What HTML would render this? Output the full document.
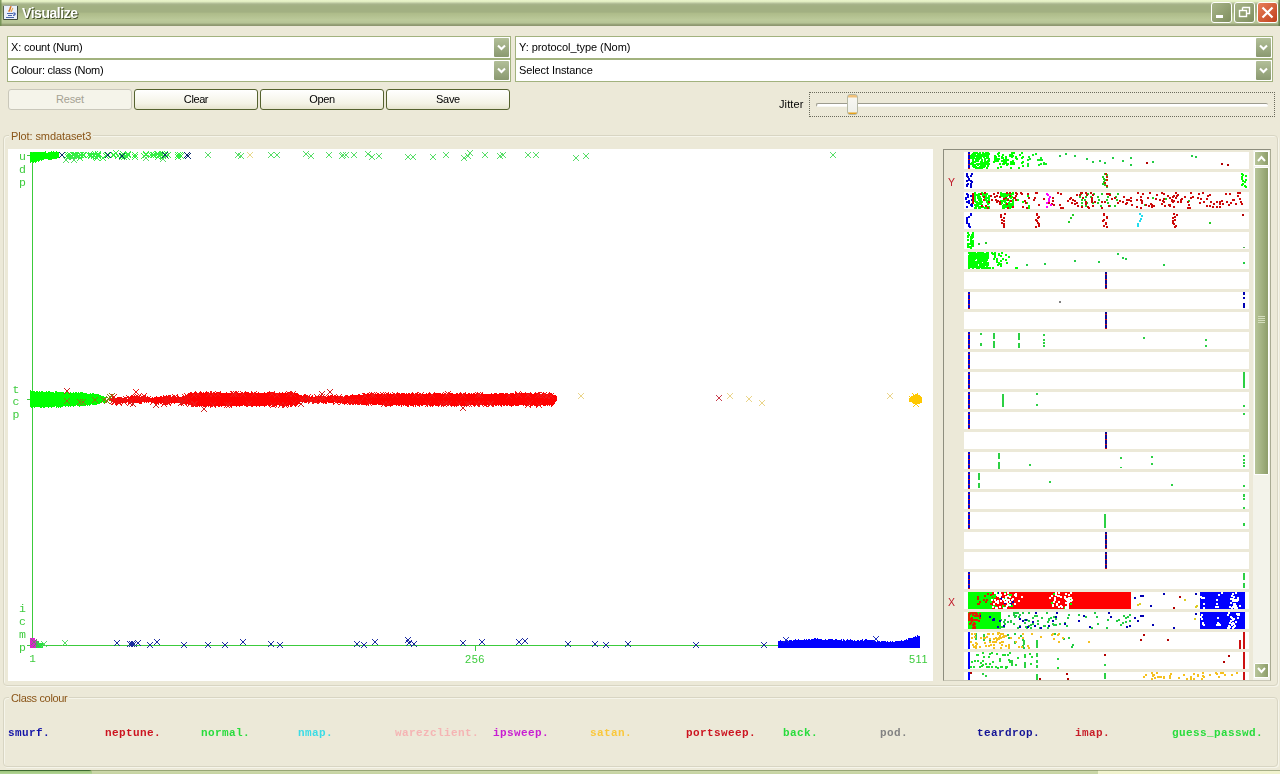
<!DOCTYPE html>
<html><head><meta charset="utf-8"><title>Visualize</title>
<style>
html,body{margin:0;padding:0;}
body{opacity:0.999;}
body{width:1280px;height:774px;overflow:hidden;background:#ECE9D8;position:relative;font-family:"Liberation Sans",sans-serif;font-size:11px;color:#000;}
.abs{position:absolute;}
#title{left:0;top:0;width:1280px;height:26px;background:linear-gradient(to bottom,#EAF5CC 0px,#E2EEC2 1.5px,#C4D0A8 2.8px,#A8B48C 4px,#A2B082 6px,#A2B082 12px,#AEBC8A 13.5px,#BCCA9A 20px,#B6C496 23px,#A0AC80 24px,#8E9870 25px,#8E9870 26px);}
#title .txt{will-change:transform;left:22px;top:5px;font-weight:bold;font-size:14px;color:#fff;text-shadow:1px 1px 0 #414c28;letter-spacing:-0.45px;white-space:nowrap;}
.cap{top:2px;width:21px;height:21px;box-sizing:border-box;border:1px solid #fff;border-radius:3px;background:linear-gradient(135deg,#a8b58a,#7f8e5e);}
.combo{box-sizing:border-box;height:23px;border:1px solid #A2B27E;background:#fff;}
.combo .t{left:3px;top:4px;white-space:nowrap;}
.combo .b{right:1px;top:1px;width:15px;height:19px;background:linear-gradient(to bottom,#b2bf98,#8a9970);border-radius:1px;}
.btn{box-sizing:border-box;top:89px;width:124px;height:21px;border:1px solid #55622f;border-radius:3px;background:linear-gradient(to bottom,#ffffff,#f4f3e6 70%,#e6e4cf);text-align:center;line-height:19px;}
.btn.dis{border-color:#c9c7ba;background:#f5f4ea;color:#a5a294;}
.gb{box-sizing:border-box;border:1px solid #d8d5c3;border-radius:4px;box-shadow:1px 1px 0 #f6f5ea, inset 1px 1px 0 #f6f5ea;}
.gbt{will-change:transform;background:#ECE9D8;color:#8A5518;padding:0 2px;white-space:nowrap;}
.leg{will-change:transform;top:726.5px;font-family:"Liberation Mono",monospace;font-weight:bold;font-size:11px;white-space:nowrap;letter-spacing:0.4px;}
</style></head><body>

<div id="title" class="abs">
<svg class="abs" style="left:3px;top:5px" width="15" height="15" viewBox="0 0 15 15"><rect x="0.5" y="0.5" width="14" height="14" rx="1" fill="#E9F0FA" stroke="#9aa6a0"/><path d="M0.5 14.5 H14.5 V1" stroke="#3e4c3a" stroke-width="1" fill="none"/><path d="M0.5 1 V14.5" stroke="#55644e" stroke-width="1" fill="none"/><path d="M8.3 1.2 C6.2 3.2 8.2 4.2 5.6 6.6" stroke="#D9701A" stroke-width="1.5" fill="none"/><path d="M10 3.2 C8.4 4.6 9.6 5.4 7.8 6.8" stroke="#EBA040" stroke-width="1.1" fill="none"/><path d="M3.5 8.5 H10 M4.5 10.5 H9 M3 12.5 H10.5" stroke="#4a68a8" stroke-width="1" shape-rendering="crispEdges"/><path d="M10.3 7.8 C13 8 12.6 10.4 10 10.4" stroke="#3a5cb0" stroke-width="1.2" fill="none"/></svg>
<div class="abs" style="left:0;top:0;width:2px;height:26px;background:linear-gradient(to right,#6c8c4c,rgba(124,154,92,0.3))"></div>
<div class="abs txt">Visualize</div>
<div class="abs" style="left:1278px;top:0;width:2px;height:26px;background:linear-gradient(to right,rgba(110,140,80,0.4),#587040)"></div>
<div class="abs cap" style="left:1211px"><svg width="19" height="19"><rect x="4" y="12" width="7" height="3" fill="#fff"/></svg></div>
<div class="abs cap" style="left:1234px"><svg width="19" height="19"><path d="M7.5 4.5 H14.5 V10.5 H12 M7.5 4.5 V7" stroke="#fff" stroke-width="1.4" fill="none"/><rect x="4.5" y="7.5" width="7" height="6" stroke="#fff" stroke-width="1.4" fill="none"/></svg></div>
<div class="abs cap" style="left:1257px;background:linear-gradient(135deg,#e8805a,#c0401c)"><svg width="19" height="19"><path d="M4.5 4.5 L14.5 14.5 M14.5 4.5 L4.5 14.5" stroke="#fff" stroke-width="2.2"/></svg></div>
</div>
<div class="abs combo" style="left:7px;top:36px;width:504px"><div class="abs t" style="letter-spacing:-0.18px">X: count (Num)</div><div class="abs b"><svg class="abs" style="left:3px;top:6px" width="9" height="7"><path d="M1 1.5 L4.5 5 L8 1.5" stroke="#fff" stroke-width="2.1" fill="none"/></svg></div></div>
<div class="abs combo" style="left:7px;top:59px;width:504px"><div class="abs t" style="letter-spacing:-0.25px">Colour: class (Nom)</div><div class="abs b"><svg class="abs" style="left:3px;top:6px" width="9" height="7"><path d="M1 1.5 L4.5 5 L8 1.5" stroke="#fff" stroke-width="2.1" fill="none"/></svg></div></div>
<div class="abs combo" style="left:515px;top:36px;width:758px"><div class="abs t" style="letter-spacing:-0.05px">Y: protocol_type (Nom)</div><div class="abs b"><svg class="abs" style="left:3px;top:6px" width="9" height="7"><path d="M1 1.5 L4.5 5 L8 1.5" stroke="#fff" stroke-width="2.1" fill="none"/></svg></div></div>
<div class="abs combo" style="left:515px;top:59px;width:758px"><div class="abs t" style="letter-spacing:-0.1px">Select Instance</div><div class="abs b"><svg class="abs" style="left:3px;top:6px" width="9" height="7"><path d="M1 1.5 L4.5 5 L8 1.5" stroke="#fff" stroke-width="2.1" fill="none"/></svg></div></div>
<div class="abs btn dis" style="left:8px;letter-spacing:-0.15px">Reset</div>
<div class="abs btn" style="left:134px;letter-spacing:-0.4px">Clear</div>
<div class="abs btn" style="left:260px;letter-spacing:-0.3px">Open</div>
<div class="abs btn" style="left:386px;letter-spacing:-0.3px">Save</div>
<div class="abs" style="left:779px;top:98px;letter-spacing:0.1px">Jitter</div>
<div class="abs" style="left:809px;top:92px;width:466px;height:25px;box-sizing:border-box;border:1px dotted #6b6b5c;"></div>
<div class="abs" style="left:816px;top:103px;width:452px;height:4px;box-sizing:border-box;border-top:1px solid #9d9c8e;border-left:1px solid #9d9c8e;background:#fff;border-radius:2px;border-bottom:1px solid #f8f8f2"></div>
<div class="abs" style="left:847px;top:94px;width:11px;height:21px;box-sizing:border-box;border:1px solid #b5b8a5;border-radius:3px;background:linear-gradient(to bottom,#f0c078 0,#f0c078 2px,#f7f7f2 3px,#eef0ea 17px,#e5a01b 18px,#e5a01b 21px);"></div>
<div class="abs gb" style="left:3px;top:135px;width:1275px;height:551px"></div>
<div class="abs gbt" style="left:9px;top:130px;letter-spacing:-0.1px">Plot: smdataset3</div>
<div class="abs" style="left:8px;top:149px;width:925px;height:532px;background:#fff"></div>
<div class="abs" style="left:943px;top:149px;width:328px;height:532px;box-sizing:border-box;border:1px solid #8e8e7e;border-bottom-color:#c9c7b6;border-right-color:#a9aa92"></div>
<div class="abs gb" style="left:3px;top:697px;width:1275px;height:70px"></div>
<div class="abs gbt" style="left:9px;top:692px;letter-spacing:-0.35px">Class colour</div>
<div class="abs leg" style="left:8px;color:#1414A8">smurf.</div>
<div class="abs leg" style="left:105px;color:#CC1420">neptune.</div>
<div class="abs leg" style="left:201px;color:#28DC3C">normal.</div>
<div class="abs leg" style="left:298px;color:#3CDCE6">nmap.</div>
<div class="abs leg" style="left:395px;color:#F5B4B4">warezclient.</div>
<div class="abs leg" style="left:493px;color:#C81ED2">ipsweep.</div>
<div class="abs leg" style="left:590px;color:#FAC83C">satan.</div>
<div class="abs leg" style="left:686px;color:#CC1420">portsweep.</div>
<div class="abs leg" style="left:783px;color:#28DC3C">back.</div>
<div class="abs leg" style="left:880px;color:#828282">pod.</div>
<div class="abs leg" style="left:977px;color:#141496">teardrop.</div>
<div class="abs leg" style="left:1075px;color:#C81E28">imap.</div>
<div class="abs leg" style="left:1172px;color:#28DC3C">guess_passwd.</div>
<div class="abs" style="left:0;top:770px;width:1280px;height:4px;background:linear-gradient(to bottom,#98A676 0,#98A676 1px,#CCD8AA 1px,#C6D3A2 4px)"></div>
<div class="abs" style="left:0;top:770px;width:92px;height:4px;background:linear-gradient(to bottom,#3E6A30 0,#3E6A30 1px,#9CC47C 1px,#B4D696 4px);border-top-right-radius:3px"></div>
<div class="abs" style="left:1098px;top:770px;width:182px;height:4px;background:linear-gradient(to bottom,#A8B088 0,#A8B088 1px,#F2F4D0 1px,#F0F2CC 4px)"></div>
<svg class="abs" style="left:0;top:0" width="1280" height="774" viewBox="0 0 1280 774" shape-rendering="crispEdges">
<defs><path id="x" d="M-3 -3 L3 3 M3 -3 L-3 3" stroke-width="1" fill="none"/></defs>
<g stroke="#3CCB3C" stroke-width="1" fill="none"><path d="M32.5 152 V645.5 M27 645.5 H920 M475.5 645 V651 M27 155.5 H32 M27 399.5 H32"/></g>
<text x="22.5" y="160" font-family='"Liberation Mono",monospace' font-size="11.5" text-anchor="middle" fill="#3CCB3C">u</text>
<text x="22.5" y="173" font-family='"Liberation Mono",monospace' font-size="11.5" text-anchor="middle" fill="#3CCB3C">d</text>
<text x="22.5" y="186" font-family='"Liberation Mono",monospace' font-size="11.5" text-anchor="middle" fill="#3CCB3C">p</text>
<text x="16" y="393" font-family='"Liberation Mono",monospace' font-size="11.5" text-anchor="middle" fill="#3CCB3C">t</text>
<text x="16" y="405" font-family='"Liberation Mono",monospace' font-size="11.5" text-anchor="middle" fill="#3CCB3C">c</text>
<text x="16" y="418" font-family='"Liberation Mono",monospace' font-size="11.5" text-anchor="middle" fill="#3CCB3C">p</text>
<text x="22.5" y="612" font-family='"Liberation Mono",monospace' font-size="11.5" text-anchor="middle" fill="#3CCB3C">i</text>
<text x="22.5" y="625" font-family='"Liberation Mono",monospace' font-size="11.5" text-anchor="middle" fill="#3CCB3C">c</text>
<text x="22.5" y="638" font-family='"Liberation Mono",monospace' font-size="11.5" text-anchor="middle" fill="#3CCB3C">m</text>
<text x="22.5" y="651" font-family='"Liberation Mono",monospace' font-size="11.5" text-anchor="middle" fill="#3CCB3C">p</text>
<text x="32.5" y="662" font-family='"Liberation Mono",monospace' font-size="11" text-anchor="middle" fill="#3CCB3C">1</text>
<text x="475" y="663" font-family='"Liberation Sans",sans-serif' letter-spacing='0.5' font-size="11" text-anchor="middle" fill="#3CCB3C">256</text>
<text x="918.5" y="663" font-family='"Liberation Sans",sans-serif' letter-spacing='0.5' font-size="11" text-anchor="middle" fill="#3CCB3C">511</text>
<path d="M30 152 L31 152 L31 152 L32 152 L32 153 L33 153 L33 152 L34 152 L34 152 L35 152 L35 152 L36 152 L36 152 L37 152 L37 152 L38 152 L38 152 L39 152 L39 152 L40 152 L40 152 L41 152 L41 152 L42 152 L42 152 L43 152 L43 152 L44 152 L44 152 L45 152 L45 151 L46 151 L46 153 L47 153 L47 153 L48 153 L48 152 L49 152 L49 152 L50 152 L50 152 L51 152 L51 151 L52 151 L52 152 L53 152 L53 151 L54 151 L54 152 L55 152 L55 152 L56 152 L56 151 L57 151 L57 152 L58 152 L58 152 L59 152 L59 158 L58 158 L58 158 L57 158 L57 159 L56 159 L56 159 L55 159 L55 159 L54 159 L54 159 L53 159 L53 159 L52 159 L52 160 L51 160 L51 160 L50 160 L50 160 L49 160 L49 160 L48 160 L48 159 L47 159 L47 159 L46 159 L46 159 L45 159 L45 159 L44 159 L44 160 L43 160 L43 160 L42 160 L42 161 L41 161 L41 160 L40 160 L40 161 L39 161 L39 162 L38 162 L38 161 L37 161 L37 162 L36 162 L36 163 L35 163 L35 162 L34 162 L34 163 L33 163 L33 162 L32 162 L32 162 L31 162 L31 163 L30 163Z" fill="#00FF00"/>
<g stroke="#33EE44" fill="none" stroke-width="1"><use href="#x" x="80" y="155"/><use href="#x" x="72" y="156"/><use href="#x" x="83" y="155"/><use href="#x" x="70" y="155"/><use href="#x" x="68" y="157"/><use href="#x" x="69" y="156"/><use href="#x" x="76" y="155"/><use href="#x" x="79" y="156"/><use href="#x" x="68" y="155"/><use href="#x" x="74" y="155"/><use href="#x" x="70" y="155"/><use href="#x" x="80" y="158"/><use href="#x" x="71" y="156"/><use href="#x" x="73" y="155"/><use href="#x" x="81" y="155"/><use href="#x" x="84" y="155"/><use href="#x" x="70" y="155"/><use href="#x" x="72" y="157"/><use href="#x" x="71" y="156"/><use href="#x" x="76" y="156"/><use href="#x" x="98" y="154"/><use href="#x" x="107" y="155"/><use href="#x" x="128" y="154"/><use href="#x" x="124" y="155"/><use href="#x" x="96" y="157"/><use href="#x" x="122" y="157"/><use href="#x" x="98" y="156"/><use href="#x" x="127" y="157"/><use href="#x" x="96" y="157"/><use href="#x" x="113" y="155"/><use href="#x" x="106" y="156"/><use href="#x" x="128" y="155"/><use href="#x" x="98" y="155"/><use href="#x" x="123" y="154"/><use href="#x" x="113" y="155"/><use href="#x" x="118" y="156"/><use href="#x" x="91" y="155"/><use href="#x" x="124" y="157"/><use href="#x" x="114" y="155"/><use href="#x" x="97" y="158"/><use href="#x" x="89" y="155"/><use href="#x" x="91" y="156"/><use href="#x" x="95" y="154"/><use href="#x" x="94" y="156"/><use href="#x" x="103" y="158"/><use href="#x" x="116" y="153"/><use href="#x" x="156" y="155"/><use href="#x" x="135" y="155"/><use href="#x" x="135" y="157"/><use href="#x" x="165" y="154"/><use href="#x" x="135" y="155"/><use href="#x" x="157" y="154"/><use href="#x" x="144" y="156"/><use href="#x" x="151" y="155"/><use href="#x" x="158" y="157"/><use href="#x" x="157" y="154"/><use href="#x" x="159" y="156"/><use href="#x" x="156" y="155"/><use href="#x" x="163" y="156"/><use href="#x" x="159" y="155"/><use href="#x" x="162" y="154"/><use href="#x" x="146" y="155"/><use href="#x" x="153" y="155"/><use href="#x" x="154" y="155"/><use href="#x" x="166" y="156"/><use href="#x" x="146" y="154"/><use href="#x" x="158" y="154"/><use href="#x" x="161" y="155"/><use href="#x" x="168" y="155"/><use href="#x" x="180" y="155"/><use href="#x" x="178" y="155"/><use href="#x" x="178" y="157"/><use href="#x" x="181" y="156"/></g>
<g stroke="#55DD66" fill="none" stroke-width="1"><use href="#x" x="208" y="155"/><use href="#x" x="238" y="155"/><use href="#x" x="241" y="156"/><use href="#x" x="271" y="155"/><use href="#x" x="277" y="155"/><use href="#x" x="306" y="154"/><use href="#x" x="311" y="156"/><use href="#x" x="329" y="155"/><use href="#x" x="342" y="156"/><use href="#x" x="343" y="155"/><use href="#x" x="346" y="155"/><use href="#x" x="354" y="155"/><use href="#x" x="368" y="154"/><use href="#x" x="372" y="157"/><use href="#x" x="379" y="156"/><use href="#x" x="408" y="157"/><use href="#x" x="413" y="157"/><use href="#x" x="433" y="157"/><use href="#x" x="446" y="155"/><use href="#x" x="464" y="158"/><use href="#x" x="468" y="156"/><use href="#x" x="470" y="153"/><use href="#x" x="485" y="155"/><use href="#x" x="500" y="156"/><use href="#x" x="503" y="155"/><use href="#x" x="528" y="155"/><use href="#x" x="536" y="155"/><use href="#x" x="576" y="158"/><use href="#x" x="586" y="156"/><use href="#x" x="833" y="155"/><use href="#x" x="74" y="160"/><use href="#x" x="66" y="160"/><use href="#x" x="146" y="158"/><use href="#x" x="163" y="159"/></g>
<g stroke="#E8D888" fill="none" stroke-width="1"><use href="#x" x="250" y="155"/></g>
<g stroke="#0C2C6C" fill="none" stroke-width="1"><use href="#x" x="62" y="155"/><use href="#x" x="187" y="155"/><use href="#x" x="188" y="156"/><use href="#x" x="108" y="155"/><use href="#x" x="122" y="156"/><use href="#x" x="165" y="155"/></g>
<path d="M30 390 L31 390 L31 391 L32 391 L32 391 L33 391 L33 391 L34 391 L34 391 L35 391 L35 392 L36 392 L36 391 L37 391 L37 391 L38 391 L38 392 L39 392 L39 391 L40 391 L40 392 L41 392 L41 391 L42 391 L42 391 L43 391 L43 392 L44 392 L44 392 L45 392 L45 392 L46 392 L46 391 L47 391 L47 392 L48 392 L48 391 L49 391 L49 391 L50 391 L50 392 L51 392 L51 392 L52 392 L52 392 L53 392 L53 392 L54 392 L54 393 L55 393 L55 391 L56 391 L56 391 L57 391 L57 392 L58 392 L58 392 L59 392 L59 392 L60 392 L60 392 L61 392 L61 392 L62 392 L62 392 L63 392 L63 392 L64 392 L64 393 L65 393 L65 393 L66 393 L66 392 L67 392 L67 392 L68 392 L68 392 L69 392 L69 393 L70 393 L70 392 L71 392 L71 393 L72 393 L72 393 L73 393 L73 392 L74 392 L74 393 L75 393 L75 392 L76 392 L76 392 L77 392 L77 393 L78 393 L78 392 L79 392 L79 393 L80 393 L80 392 L81 392 L81 392 L82 392 L82 392 L83 392 L83 393 L84 393 L84 393 L85 393 L85 393 L86 393 L86 393 L87 393 L87 394 L88 394 L88 394 L89 394 L89 394 L90 394 L90 393 L91 393 L91 394 L92 394 L92 393 L93 393 L93 393 L94 393 L94 394 L95 394 L95 394 L96 394 L96 394 L97 394 L97 394 L98 394 L98 394 L99 394 L99 395 L100 395 L100 395 L101 395 L101 396 L102 396 L102 396 L103 396 L103 396 L104 396 L104 397 L105 397 L105 397 L106 397 L106 401 L105 401 L105 403 L104 403 L104 403 L103 403 L103 402 L102 402 L102 403 L101 403 L101 403 L100 403 L100 404 L99 404 L99 404 L98 404 L98 404 L97 404 L97 405 L96 405 L96 405 L95 405 L95 405 L94 405 L94 405 L93 405 L93 405 L92 405 L92 404 L91 404 L91 405 L90 405 L90 406 L89 406 L89 405 L88 405 L88 406 L87 406 L87 405 L86 405 L86 406 L85 406 L85 406 L84 406 L84 406 L83 406 L83 406 L82 406 L82 406 L81 406 L81 406 L80 406 L80 407 L79 407 L79 406 L78 406 L78 406 L77 406 L77 405 L76 405 L76 406 L75 406 L75 406 L74 406 L74 407 L73 407 L73 406 L72 406 L72 406 L71 406 L71 407 L70 407 L70 406 L69 406 L69 407 L68 407 L68 406 L67 406 L67 406 L66 406 L66 407 L65 407 L65 406 L64 406 L64 406 L63 406 L63 407 L62 407 L62 407 L61 407 L61 408 L60 408 L60 407 L59 407 L59 408 L58 408 L58 407 L57 407 L57 408 L56 408 L56 406 L55 406 L55 407 L54 407 L54 407 L53 407 L53 407 L52 407 L52 408 L51 408 L51 407 L50 407 L50 407 L49 407 L49 408 L48 408 L48 407 L47 407 L47 407 L46 407 L46 407 L45 407 L45 408 L44 408 L44 408 L43 408 L43 407 L42 407 L42 408 L41 408 L41 408 L40 408 L40 407 L39 407 L39 407 L38 407 L38 407 L37 407 L37 407 L36 407 L36 407 L35 407 L35 408 L34 408 L34 407 L33 407 L33 408 L32 408 L32 408 L31 408 L31 407 L30 407Z" fill="#00FF00"/>
<path d="M108 399 L109 399 L109 398 L110 398 L110 398 L111 398 L111 398 L112 398 L112 397 L113 397 L113 397 L114 397 L114 397 L115 397 L115 398 L116 398 L116 398 L117 398 L117 397 L118 397 L118 397 L119 397 L119 397 L120 397 L120 397 L121 397 L121 398 L122 398 L122 398 L123 398 L123 398 L124 398 L124 398 L125 398 L125 397 L126 397 L126 398 L127 398 L127 399 L128 399 L128 397 L129 397 L129 398 L130 398 L130 396 L131 396 L131 396 L132 396 L132 396 L133 396 L133 397 L134 397 L134 396 L135 396 L135 396 L136 396 L136 397 L137 397 L137 396 L138 396 L138 397 L139 397 L139 396 L140 396 L140 397 L141 397 L141 397 L142 397 L142 397 L143 397 L143 397 L144 397 L144 397 L145 397 L145 397 L146 397 L146 397 L147 397 L147 397 L148 397 L148 397 L149 397 L149 397 L150 397 L150 398 L151 398 L151 398 L152 398 L152 397 L153 397 L153 398 L154 398 L154 397 L155 397 L155 397 L156 397 L156 396 L157 396 L157 397 L158 397 L158 397 L159 397 L159 397 L160 397 L160 396 L161 396 L161 396 L162 396 L162 397 L163 397 L163 396 L164 396 L164 397 L165 397 L165 397 L166 397 L166 395 L167 395 L167 396 L168 396 L168 396 L169 396 L169 396 L170 396 L170 395 L171 395 L171 397 L172 397 L172 396 L173 396 L173 397 L174 397 L174 395 L175 395 L175 396 L176 396 L176 397 L177 397 L177 395 L178 395 L178 396 L179 396 L179 397 L180 397 L180 397 L181 397 L181 397 L182 397 L182 396 L183 396 L183 396 L184 396 L184 397 L185 397 L185 396 L186 396 L186 396 L187 396 L187 394 L188 394 L188 393 L189 393 L189 393 L190 393 L190 392 L191 392 L191 393 L192 393 L192 393 L193 393 L193 393 L194 393 L194 392 L195 392 L195 392 L196 392 L196 392 L197 392 L197 393 L198 393 L198 393 L199 393 L199 393 L200 393 L200 392 L201 392 L201 392 L202 392 L202 393 L203 393 L203 392 L204 392 L204 393 L205 393 L205 392 L206 392 L206 392 L207 392 L207 393 L208 393 L208 392 L209 392 L209 393 L210 393 L210 392 L211 392 L211 393 L212 393 L212 393 L213 393 L213 392 L214 392 L214 392 L215 392 L215 393 L216 393 L216 392 L217 392 L217 392 L218 392 L218 392 L219 392 L219 393 L220 393 L220 392 L221 392 L221 393 L222 393 L222 393 L223 393 L223 393 L224 393 L224 393 L225 393 L225 393 L226 393 L226 392 L227 392 L227 393 L228 393 L228 393 L229 393 L229 393 L230 393 L230 393 L231 393 L231 392 L232 392 L232 393 L233 393 L233 393 L234 393 L234 393 L235 393 L235 393 L236 393 L236 392 L237 392 L237 393 L238 393 L238 393 L239 393 L239 393 L240 393 L240 393 L241 393 L241 393 L242 393 L242 392 L243 392 L243 393 L244 393 L244 392 L245 392 L245 392 L246 392 L246 392 L247 392 L247 392 L248 392 L248 392 L249 392 L249 393 L250 393 L250 393 L251 393 L251 392 L252 392 L252 393 L253 393 L253 393 L254 393 L254 392 L255 392 L255 393 L256 393 L256 393 L257 393 L257 393 L258 393 L258 392 L259 392 L259 393 L260 393 L260 393 L261 393 L261 393 L262 393 L262 393 L263 393 L263 393 L264 393 L264 392 L265 392 L265 393 L266 393 L266 393 L267 393 L267 392 L268 392 L268 392 L269 392 L269 392 L270 392 L270 392 L271 392 L271 392 L272 392 L272 392 L273 392 L273 392 L274 392 L274 393 L275 393 L275 393 L276 393 L276 393 L277 393 L277 393 L278 393 L278 393 L279 393 L279 393 L280 393 L280 393 L281 393 L281 393 L282 393 L282 392 L283 392 L283 393 L284 393 L284 393 L285 393 L285 392 L286 392 L286 393 L287 393 L287 392 L288 392 L288 392 L289 392 L289 392 L290 392 L290 392 L291 392 L291 393 L292 393 L292 392 L293 392 L293 393 L294 393 L294 392 L295 392 L295 393 L296 393 L296 393 L297 393 L297 393 L298 393 L298 394 L299 394 L299 395 L300 395 L300 395 L301 395 L301 395 L302 395 L302 396 L303 396 L303 395 L304 395 L304 394 L305 394 L305 395 L306 395 L306 395 L307 395 L307 395 L308 395 L308 396 L309 396 L309 396 L310 396 L310 397 L311 397 L311 396 L312 396 L312 395 L313 395 L313 397 L314 397 L314 397 L315 397 L315 395 L316 395 L316 397 L317 397 L317 396 L318 396 L318 396 L319 396 L319 397 L320 397 L320 396 L321 396 L321 396 L322 396 L322 397 L323 397 L323 396 L324 396 L324 396 L325 396 L325 397 L326 397 L326 397 L327 397 L327 396 L328 396 L328 395 L329 395 L329 396 L330 396 L330 396 L331 396 L331 395 L332 395 L332 395 L333 395 L333 396 L334 396 L334 395 L335 395 L335 396 L336 396 L336 396 L337 396 L337 396 L338 396 L338 396 L339 396 L339 396 L340 396 L340 396 L341 396 L341 396 L342 396 L342 396 L343 396 L343 397 L344 397 L344 396 L345 396 L345 396 L346 396 L346 395 L347 395 L347 395 L348 395 L348 396 L349 396 L349 396 L350 396 L350 395 L351 395 L351 395 L352 395 L352 394 L353 394 L353 395 L354 395 L354 395 L355 395 L355 395 L356 395 L356 395 L357 395 L357 395 L358 395 L358 394 L359 394 L359 394 L360 394 L360 395 L361 395 L361 395 L362 395 L362 395 L363 395 L363 393 L364 393 L364 393 L365 393 L365 394 L366 394 L366 394 L367 394 L367 394 L368 394 L368 393 L369 393 L369 394 L370 394 L370 393 L371 393 L371 393 L372 393 L372 394 L373 394 L373 394 L374 394 L374 394 L375 394 L375 394 L376 394 L376 394 L377 394 L377 393 L378 393 L378 393 L379 393 L379 394 L380 394 L380 394 L381 394 L381 393 L382 393 L382 393 L383 393 L383 394 L384 394 L384 394 L385 394 L385 394 L386 394 L386 393 L387 393 L387 393 L388 393 L388 393 L389 393 L389 394 L390 394 L390 393 L391 393 L391 394 L392 394 L392 394 L393 394 L393 393 L394 393 L394 393 L395 393 L395 394 L396 394 L396 394 L397 394 L397 393 L398 393 L398 393 L399 393 L399 393 L400 393 L400 394 L401 394 L401 393 L402 393 L402 393 L403 393 L403 393 L404 393 L404 393 L405 393 L405 394 L406 394 L406 393 L407 393 L407 394 L408 394 L408 393 L409 393 L409 393 L410 393 L410 394 L411 394 L411 393 L412 393 L412 393 L413 393 L413 394 L414 394 L414 394 L415 394 L415 393 L416 393 L416 393 L417 393 L417 393 L418 393 L418 394 L419 394 L419 393 L420 393 L420 393 L421 393 L421 394 L422 394 L422 393 L423 393 L423 394 L424 394 L424 394 L425 394 L425 394 L426 394 L426 393 L427 393 L427 394 L428 394 L428 393 L429 393 L429 393 L430 393 L430 393 L431 393 L431 394 L432 394 L432 394 L433 394 L433 393 L434 393 L434 393 L435 393 L435 393 L436 393 L436 393 L437 393 L437 393 L438 393 L438 393 L439 393 L439 393 L440 393 L440 393 L441 393 L441 394 L442 394 L442 393 L443 393 L443 394 L444 394 L444 393 L445 393 L445 393 L446 393 L446 394 L447 394 L447 394 L448 394 L448 393 L449 393 L449 392 L450 392 L450 393 L451 393 L451 393 L452 393 L452 393 L453 393 L453 394 L454 394 L454 394 L455 394 L455 394 L456 394 L456 393 L457 393 L457 393 L458 393 L458 394 L459 394 L459 393 L460 393 L460 393 L461 393 L461 394 L462 394 L462 394 L463 394 L463 393 L464 393 L464 394 L465 394 L465 393 L466 393 L466 394 L467 394 L467 394 L468 394 L468 393 L469 393 L469 393 L470 393 L470 394 L471 394 L471 393 L472 393 L472 394 L473 394 L473 393 L474 393 L474 393 L475 393 L475 394 L476 394 L476 394 L477 394 L477 393 L478 393 L478 393 L479 393 L479 394 L480 394 L480 394 L481 394 L481 394 L482 394 L482 393 L483 393 L483 394 L484 394 L484 394 L485 394 L485 394 L486 394 L486 394 L487 394 L487 394 L488 394 L488 394 L489 394 L489 394 L490 394 L490 394 L491 394 L491 393 L492 393 L492 394 L493 394 L493 394 L494 394 L494 393 L495 393 L495 393 L496 393 L496 393 L497 393 L497 394 L498 394 L498 394 L499 394 L499 393 L500 393 L500 393 L501 393 L501 393 L502 393 L502 393 L503 393 L503 393 L504 393 L504 394 L505 394 L505 393 L506 393 L506 393 L507 393 L507 393 L508 393 L508 394 L509 394 L509 394 L510 394 L510 393 L511 393 L511 393 L512 393 L512 393 L513 393 L513 393 L514 393 L514 394 L515 394 L515 392 L516 392 L516 393 L517 393 L517 393 L518 393 L518 393 L519 393 L519 393 L520 393 L520 394 L521 394 L521 393 L522 393 L522 393 L523 393 L523 393 L524 393 L524 393 L525 393 L525 393 L526 393 L526 394 L527 394 L527 393 L528 393 L528 393 L529 393 L529 394 L530 394 L530 393 L531 393 L531 393 L532 393 L532 394 L533 394 L533 394 L534 394 L534 393 L535 393 L535 393 L536 393 L536 394 L537 394 L537 393 L538 393 L538 393 L539 393 L539 392 L540 392 L540 394 L541 394 L541 394 L542 394 L542 393 L543 393 L543 393 L544 393 L544 393 L545 393 L545 393 L546 393 L546 394 L547 394 L547 394 L548 394 L548 393 L549 393 L549 392 L550 392 L550 393 L551 393 L551 393 L552 393 L552 394 L553 394 L553 395 L554 395 L554 395 L555 395 L555 395 L556 395 L556 396 L557 396 L557 401 L556 401 L556 402 L555 402 L555 404 L554 404 L554 405 L553 405 L553 406 L552 406 L552 407 L551 407 L551 405 L550 405 L550 406 L549 406 L549 405 L548 405 L548 406 L547 406 L547 405 L546 405 L546 406 L545 406 L545 406 L544 406 L544 406 L543 406 L543 405 L542 405 L542 405 L541 405 L541 406 L540 406 L540 405 L539 405 L539 406 L538 406 L538 406 L537 406 L537 407 L536 407 L536 406 L535 406 L535 406 L534 406 L534 405 L533 405 L533 406 L532 406 L532 406 L531 406 L531 407 L530 407 L530 405 L529 405 L529 406 L528 406 L528 405 L527 405 L527 406 L526 406 L526 406 L525 406 L525 405 L524 405 L524 406 L523 406 L523 405 L522 405 L522 405 L521 405 L521 405 L520 405 L520 405 L519 405 L519 406 L518 406 L518 406 L517 406 L517 406 L516 406 L516 406 L515 406 L515 405 L514 405 L514 406 L513 406 L513 406 L512 406 L512 407 L511 407 L511 406 L510 406 L510 406 L509 406 L509 405 L508 405 L508 406 L507 406 L507 406 L506 406 L506 405 L505 405 L505 406 L504 406 L504 406 L503 406 L503 405 L502 405 L502 407 L501 407 L501 406 L500 406 L500 405 L499 405 L499 406 L498 406 L498 405 L497 405 L497 406 L496 406 L496 406 L495 406 L495 405 L494 405 L494 406 L493 406 L493 406 L492 406 L492 406 L491 406 L491 405 L490 405 L490 405 L489 405 L489 406 L488 406 L488 405 L487 405 L487 407 L486 407 L486 406 L485 406 L485 406 L484 406 L484 405 L483 405 L483 406 L482 406 L482 405 L481 405 L481 405 L480 405 L480 405 L479 405 L479 406 L478 406 L478 406 L477 406 L477 405 L476 405 L476 406 L475 406 L475 406 L474 406 L474 406 L473 406 L473 405 L472 405 L472 405 L471 405 L471 405 L470 405 L470 405 L469 405 L469 406 L468 406 L468 405 L467 405 L467 407 L466 407 L466 406 L465 406 L465 406 L464 406 L464 406 L463 406 L463 406 L462 406 L462 406 L461 406 L461 406 L460 406 L460 405 L459 405 L459 406 L458 406 L458 405 L457 405 L457 406 L456 406 L456 406 L455 406 L455 407 L454 407 L454 406 L453 406 L453 406 L452 406 L452 406 L451 406 L451 405 L450 405 L450 405 L449 405 L449 406 L448 406 L448 406 L447 406 L447 405 L446 405 L446 406 L445 406 L445 406 L444 406 L444 406 L443 406 L443 406 L442 406 L442 406 L441 406 L441 405 L440 405 L440 406 L439 406 L439 407 L438 407 L438 406 L437 406 L437 406 L436 406 L436 406 L435 406 L435 405 L434 405 L434 406 L433 406 L433 407 L432 407 L432 406 L431 406 L431 406 L430 406 L430 406 L429 406 L429 405 L428 405 L428 407 L427 407 L427 406 L426 406 L426 405 L425 405 L425 405 L424 405 L424 405 L423 405 L423 406 L422 406 L422 406 L421 406 L421 405 L420 405 L420 407 L419 407 L419 406 L418 406 L418 406 L417 406 L417 405 L416 405 L416 407 L415 407 L415 405 L414 405 L414 407 L413 407 L413 406 L412 406 L412 406 L411 406 L411 406 L410 406 L410 405 L409 405 L409 407 L408 407 L408 407 L407 407 L407 406 L406 406 L406 406 L405 406 L405 405 L404 405 L404 406 L403 406 L403 405 L402 405 L402 407 L401 407 L401 405 L400 405 L400 406 L399 406 L399 406 L398 406 L398 405 L397 405 L397 406 L396 406 L396 405 L395 405 L395 405 L394 405 L394 405 L393 405 L393 406 L392 406 L392 406 L391 406 L391 406 L390 406 L390 405 L389 405 L389 406 L388 406 L388 406 L387 406 L387 405 L386 405 L386 405 L385 405 L385 406 L384 406 L384 404 L383 404 L383 405 L382 405 L382 405 L381 405 L381 405 L380 405 L380 405 L379 405 L379 405 L378 405 L378 404 L377 404 L377 405 L376 405 L376 405 L375 405 L375 405 L374 405 L374 405 L373 405 L373 405 L372 405 L372 404 L371 404 L371 405 L370 405 L370 404 L369 404 L369 406 L368 406 L368 405 L367 405 L367 405 L366 405 L366 405 L365 405 L365 405 L364 405 L364 405 L363 405 L363 405 L362 405 L362 405 L361 405 L361 404 L360 404 L360 405 L359 405 L359 405 L358 405 L358 405 L357 405 L357 404 L356 404 L356 404 L355 404 L355 404 L354 404 L354 405 L353 405 L353 404 L352 404 L352 404 L351 404 L351 404 L350 404 L350 405 L349 405 L349 404 L348 404 L348 403 L347 403 L347 404 L346 404 L346 404 L345 404 L345 404 L344 404 L344 404 L343 404 L343 404 L342 404 L342 403 L341 403 L341 404 L340 404 L340 403 L339 403 L339 403 L338 403 L338 403 L337 403 L337 403 L336 403 L336 403 L335 403 L335 402 L334 402 L334 404 L333 404 L333 403 L332 403 L332 403 L331 403 L331 403 L330 403 L330 403 L329 403 L329 403 L328 403 L328 402 L327 402 L327 404 L326 404 L326 404 L325 404 L325 403 L324 403 L324 404 L323 404 L323 403 L322 403 L322 403 L321 403 L321 402 L320 402 L320 403 L319 403 L319 403 L318 403 L318 403 L317 403 L317 402 L316 402 L316 403 L315 403 L315 402 L314 402 L314 403 L313 403 L313 403 L312 403 L312 402 L311 402 L311 402 L310 402 L310 402 L309 402 L309 402 L308 402 L308 402 L307 402 L307 403 L306 403 L306 403 L305 403 L305 402 L304 402 L304 402 L303 402 L303 403 L302 403 L302 402 L301 402 L301 402 L300 402 L300 404 L299 404 L299 404 L298 404 L298 405 L297 405 L297 406 L296 406 L296 407 L295 407 L295 406 L294 406 L294 405 L293 405 L293 406 L292 406 L292 407 L291 407 L291 407 L290 407 L290 405 L289 405 L289 407 L288 407 L288 406 L287 406 L287 406 L286 406 L286 405 L285 405 L285 407 L284 407 L284 407 L283 407 L283 406 L282 406 L282 406 L281 406 L281 406 L280 406 L280 407 L279 407 L279 405 L278 405 L278 405 L277 405 L277 407 L276 407 L276 406 L275 406 L275 407 L274 407 L274 407 L273 407 L273 407 L272 407 L272 405 L271 405 L271 406 L270 406 L270 407 L269 407 L269 406 L268 406 L268 405 L267 405 L267 406 L266 406 L266 406 L265 406 L265 407 L264 407 L264 406 L263 406 L263 406 L262 406 L262 406 L261 406 L261 406 L260 406 L260 407 L259 407 L259 406 L258 406 L258 406 L257 406 L257 407 L256 407 L256 406 L255 406 L255 406 L254 406 L254 406 L253 406 L253 407 L252 407 L252 407 L251 407 L251 406 L250 406 L250 406 L249 406 L249 406 L248 406 L248 407 L247 407 L247 406 L246 406 L246 406 L245 406 L245 406 L244 406 L244 405 L243 405 L243 406 L242 406 L242 406 L241 406 L241 406 L240 406 L240 407 L239 407 L239 406 L238 406 L238 406 L237 406 L237 407 L236 407 L236 406 L235 406 L235 406 L234 406 L234 406 L233 406 L233 406 L232 406 L232 407 L231 407 L231 407 L230 407 L230 406 L229 406 L229 406 L228 406 L228 407 L227 407 L227 406 L226 406 L226 407 L225 407 L225 406 L224 406 L224 406 L223 406 L223 406 L222 406 L222 407 L221 407 L221 406 L220 406 L220 407 L219 407 L219 407 L218 407 L218 406 L217 406 L217 406 L216 406 L216 407 L215 407 L215 407 L214 407 L214 406 L213 406 L213 407 L212 407 L212 406 L211 406 L211 407 L210 407 L210 406 L209 406 L209 407 L208 407 L208 406 L207 406 L207 406 L206 406 L206 407 L205 407 L205 407 L204 407 L204 407 L203 407 L203 406 L202 406 L202 406 L201 406 L201 406 L200 406 L200 407 L199 407 L199 406 L198 406 L198 406 L197 406 L197 406 L196 406 L196 407 L195 407 L195 406 L194 406 L194 407 L193 407 L193 406 L192 406 L192 405 L191 405 L191 405 L190 405 L190 405 L189 405 L189 405 L188 405 L188 404 L187 404 L187 404 L186 404 L186 404 L185 404 L185 402 L184 402 L184 404 L183 404 L183 403 L182 403 L182 403 L181 403 L181 404 L180 404 L180 403 L179 403 L179 403 L178 403 L178 403 L177 403 L177 402 L176 402 L176 403 L175 403 L175 404 L174 404 L174 403 L173 403 L173 403 L172 403 L172 404 L171 404 L171 403 L170 403 L170 404 L169 404 L169 403 L168 403 L168 403 L167 403 L167 403 L166 403 L166 404 L165 404 L165 404 L164 404 L164 404 L163 404 L163 403 L162 403 L162 404 L161 404 L161 404 L160 404 L160 403 L159 403 L159 405 L158 405 L158 403 L157 403 L157 404 L156 404 L156 404 L155 404 L155 404 L154 404 L154 403 L153 403 L153 403 L152 403 L152 403 L151 403 L151 402 L150 402 L150 402 L149 402 L149 403 L148 403 L148 402 L147 402 L147 403 L146 403 L146 402 L145 402 L145 403 L144 403 L144 402 L143 402 L143 402 L142 402 L142 404 L141 404 L141 404 L140 404 L140 404 L139 404 L139 403 L138 403 L138 403 L137 403 L137 403 L136 403 L136 403 L135 403 L135 403 L134 403 L134 404 L133 404 L133 403 L132 403 L132 403 L131 403 L131 404 L130 404 L130 403 L129 403 L129 402 L128 402 L128 402 L127 402 L127 402 L126 402 L126 401 L125 401 L125 402 L124 402 L124 403 L123 403 L123 403 L122 403 L122 403 L121 403 L121 403 L120 403 L120 403 L119 403 L119 402 L118 402 L118 403 L117 403 L117 403 L116 403 L116 403 L115 403 L115 402 L114 402 L114 402 L113 402 L113 402 L112 402 L112 402 L111 402 L111 401 L110 401 L110 401 L109 401 L109 400 L108 400Z" fill="#FF0000"/>
<g stroke="#8A7A10" fill="none" stroke-width="1"><use href="#x" x="67" y="401"/><use href="#x" x="80" y="402"/><use href="#x" x="83" y="402"/><use href="#x" x="95" y="400"/><use href="#x" x="110" y="397"/><use href="#x" x="112" y="396"/><use href="#x" x="104" y="400"/><use href="#x" x="107" y="401"/><use href="#x" x="109" y="399"/></g>
<g stroke="#F01010" fill="none" stroke-width="1"><use href="#x" x="148" y="399"/><use href="#x" x="136" y="392"/><use href="#x" x="165" y="402"/><use href="#x" x="179" y="400"/><use href="#x" x="118" y="402"/><use href="#x" x="166" y="398"/><use href="#x" x="113" y="401"/><use href="#x" x="126" y="399"/><use href="#x" x="184" y="402"/><use href="#x" x="168" y="399"/><use href="#x" x="124" y="402"/><use href="#x" x="185" y="397"/><use href="#x" x="168" y="403"/><use href="#x" x="183" y="402"/><use href="#x" x="142" y="400"/><use href="#x" x="118" y="401"/><use href="#x" x="172" y="398"/><use href="#x" x="153" y="402"/><use href="#x" x="131" y="400"/><use href="#x" x="115" y="402"/><use href="#x" x="114" y="402"/><use href="#x" x="136" y="397"/><use href="#x" x="123" y="401"/><use href="#x" x="167" y="399"/><use href="#x" x="164" y="404"/><use href="#x" x="123" y="400"/><use href="#x" x="168" y="402"/><use href="#x" x="144" y="396"/><use href="#x" x="130" y="403"/><use href="#x" x="135" y="398"/><use href="#x" x="115" y="401"/><use href="#x" x="114" y="397"/><use href="#x" x="175" y="397"/><use href="#x" x="188" y="398"/><use href="#x" x="184" y="403"/><use href="#x" x="129" y="398"/><use href="#x" x="187" y="396"/><use href="#x" x="180" y="400"/><use href="#x" x="119" y="403"/><use href="#x" x="145" y="399"/><use href="#x" x="142" y="400"/><use href="#x" x="138" y="397"/><use href="#x" x="124" y="400"/><use href="#x" x="143" y="398"/><use href="#x" x="164" y="400"/><use href="#x" x="131" y="401"/></g>
<g stroke="#F01818" fill="none" stroke-width="1"><use href="#x" x="343" y="398"/><use href="#x" x="444" y="404"/><use href="#x" x="198" y="394"/><use href="#x" x="213" y="394"/><use href="#x" x="369" y="403"/><use href="#x" x="308" y="397"/><use href="#x" x="316" y="401"/><use href="#x" x="285" y="405"/><use href="#x" x="360" y="402"/><use href="#x" x="321" y="400"/><use href="#x" x="469" y="404"/><use href="#x" x="339" y="397"/><use href="#x" x="490" y="404"/><use href="#x" x="519" y="395"/><use href="#x" x="374" y="395"/><use href="#x" x="544" y="395"/><use href="#x" x="273" y="405"/><use href="#x" x="190" y="404"/><use href="#x" x="277" y="395"/><use href="#x" x="388" y="404"/><use href="#x" x="491" y="404"/><use href="#x" x="315" y="401"/><use href="#x" x="449" y="404"/><use href="#x" x="539" y="405"/><use href="#x" x="415" y="395"/><use href="#x" x="324" y="398"/><use href="#x" x="383" y="395"/><use href="#x" x="308" y="397"/><use href="#x" x="236" y="394"/><use href="#x" x="227" y="405"/><use href="#x" x="353" y="402"/><use href="#x" x="249" y="404"/><use href="#x" x="209" y="394"/><use href="#x" x="478" y="395"/><use href="#x" x="281" y="405"/><use href="#x" x="311" y="400"/><use href="#x" x="490" y="404"/><use href="#x" x="446" y="403"/><use href="#x" x="480" y="395"/><use href="#x" x="432" y="395"/><use href="#x" x="195" y="404"/><use href="#x" x="541" y="395"/><use href="#x" x="342" y="402"/><use href="#x" x="528" y="405"/><use href="#x" x="448" y="394"/><use href="#x" x="294" y="403"/><use href="#x" x="233" y="394"/><use href="#x" x="386" y="395"/><use href="#x" x="302" y="400"/><use href="#x" x="293" y="394"/><use href="#x" x="467" y="404"/><use href="#x" x="441" y="404"/><use href="#x" x="243" y="394"/><use href="#x" x="528" y="395"/><use href="#x" x="234" y="394"/><use href="#x" x="395" y="395"/><use href="#x" x="289" y="394"/><use href="#x" x="322" y="397"/><use href="#x" x="213" y="405"/><use href="#x" x="218" y="394"/><use href="#x" x="551" y="396"/><use href="#x" x="365" y="396"/><use href="#x" x="333" y="398"/><use href="#x" x="428" y="404"/><use href="#x" x="530" y="403"/><use href="#x" x="350" y="402"/><use href="#x" x="254" y="394"/><use href="#x" x="233" y="394"/><use href="#x" x="463" y="395"/><use href="#x" x="194" y="395"/><use href="#x" x="194" y="404"/><use href="#x" x="477" y="404"/><use href="#x" x="481" y="404"/><use href="#x" x="547" y="396"/><use href="#x" x="336" y="402"/><use href="#x" x="519" y="395"/><use href="#x" x="272" y="394"/><use href="#x" x="428" y="404"/><use href="#x" x="421" y="395"/><use href="#x" x="518" y="394"/><use href="#x" x="311" y="401"/><use href="#x" x="459" y="404"/><use href="#x" x="254" y="394"/><use href="#x" x="317" y="397"/><use href="#x" x="372" y="395"/><use href="#x" x="384" y="404"/><use href="#x" x="509" y="396"/><use href="#x" x="229" y="405"/><use href="#x" x="538" y="395"/><use href="#x" x="446" y="395"/></g>
<g stroke="#D02020" fill="none" stroke-width="1"><use href="#x" x="67" y="391"/><use href="#x" x="330" y="392"/><use href="#x" x="322" y="394"/><use href="#x" x="133" y="404"/><use href="#x" x="156" y="405"/><use href="#x" x="463" y="408"/><use href="#x" x="204" y="409"/><use href="#x" x="181" y="403"/><use href="#x" x="301" y="404"/><use href="#x" x="306" y="399"/></g>
<g stroke="#EAD488" fill="none" stroke-width="1"><use href="#x" x="581" y="396"/><use href="#x" x="730" y="396"/><use href="#x" x="749" y="399"/><use href="#x" x="762" y="403"/><use href="#x" x="890" y="396"/></g>
<g stroke="#C83C4C" fill="none" stroke-width="1"><use href="#x" x="719" y="398"/></g>
<path d="M909 398 L910 398 L910 398 L911 398 L911 396 L912 396 L912 396 L913 396 L913 395 L914 395 L914 396 L915 396 L915 394 L916 394 L916 394 L917 394 L917 394 L918 394 L918 395 L919 395 L919 395 L920 395 L920 396 L921 396 L921 397 L922 397 L922 403 L921 403 L921 403 L920 403 L920 404 L919 404 L919 404 L918 404 L918 404 L917 404 L917 405 L916 405 L916 405 L915 405 L915 404 L914 404 L914 404 L913 404 L913 403 L912 403 L912 402 L911 402 L911 402 L910 402 L910 402 L909 402Z" fill="#FFC800"/>
<g stroke="#FFC800" fill="none" stroke-width="1"><use href="#x" x="916" y="404"/><use href="#x" x="912" y="399"/><use href="#x" x="915" y="396"/></g>
<path d="M30 638h5v2h2v8h-7z" fill="#D828C8"/>
<path d="M36 641h3v2h4v5h-7z" fill="#28E040"/>
<g stroke="#55DD66" fill="none" stroke-width="1"><use href="#x" x="44" y="644"/><use href="#x" x="65" y="643"/></g>
<g stroke="#787878" fill="none" stroke-width="1"><use href="#x" x="34" y="642"/><use href="#x" x="36" y="644"/></g>
<g stroke="#1C2CA0" fill="none" stroke-width="1"><use href="#x" x="117" y="643"/><use href="#x" x="130" y="644"/><use href="#x" x="132" y="644"/><use href="#x" x="134" y="644"/><use href="#x" x="138" y="643"/><use href="#x" x="150" y="645"/><use href="#x" x="157" y="642"/><use href="#x" x="184" y="645"/><use href="#x" x="208" y="645"/><use href="#x" x="225" y="645"/><use href="#x" x="243" y="642"/><use href="#x" x="271" y="644"/><use href="#x" x="280" y="645"/><use href="#x" x="357" y="644"/><use href="#x" x="364" y="645"/><use href="#x" x="375" y="642"/><use href="#x" x="408" y="640"/><use href="#x" x="409" y="643"/><use href="#x" x="414" y="644"/><use href="#x" x="463" y="643"/><use href="#x" x="482" y="642"/><use href="#x" x="519" y="642"/><use href="#x" x="525" y="641"/><use href="#x" x="568" y="644"/><use href="#x" x="595" y="644"/><use href="#x" x="606" y="645"/><use href="#x" x="628" y="644"/><use href="#x" x="696" y="645"/><use href="#x" x="764" y="645"/></g>
<path d="M778 641 L779 641 L779 641 L780 641 L780 640 L781 640 L781 641 L782 641 L782 641 L783 641 L783 641 L784 641 L784 641 L785 641 L785 641 L786 641 L786 640 L787 640 L787 640 L788 640 L788 641 L789 641 L789 640 L790 640 L790 640 L791 640 L791 640 L792 640 L792 641 L793 641 L793 640 L794 640 L794 640 L795 640 L795 639 L796 639 L796 640 L797 640 L797 640 L798 640 L798 639 L799 639 L799 640 L800 640 L800 640 L801 640 L801 640 L802 640 L802 640 L803 640 L803 640 L804 640 L804 639 L805 639 L805 640 L806 640 L806 639 L807 639 L807 640 L808 640 L808 639 L809 639 L809 639 L810 639 L810 640 L811 640 L811 639 L812 639 L812 639 L813 639 L813 639 L814 639 L814 638 L815 638 L815 638 L816 638 L816 639 L817 639 L817 638 L818 638 L818 639 L819 639 L819 639 L820 639 L820 639 L821 639 L821 639 L822 639 L822 640 L823 640 L823 640 L824 640 L824 640 L825 640 L825 639 L826 639 L826 640 L827 640 L827 640 L828 640 L828 639 L829 639 L829 639 L830 639 L830 639 L831 639 L831 639 L832 639 L832 639 L833 639 L833 640 L834 640 L834 640 L835 640 L835 639 L836 639 L836 639 L837 639 L837 640 L838 640 L838 640 L839 640 L839 640 L840 640 L840 640 L841 640 L841 639 L842 639 L842 641 L843 641 L843 639 L844 639 L844 640 L845 640 L845 641 L846 641 L846 640 L847 640 L847 639 L848 639 L848 640 L849 640 L849 640 L850 640 L850 639 L851 639 L851 640 L852 640 L852 640 L853 640 L853 641 L854 641 L854 640 L855 640 L855 641 L856 641 L856 641 L857 641 L857 640 L858 640 L858 640 L859 640 L859 641 L860 641 L860 640 L861 640 L861 640 L862 640 L862 639 L863 639 L863 641 L864 641 L864 640 L865 640 L865 639 L866 639 L866 639 L867 639 L867 640 L868 640 L868 640 L869 640 L869 640 L870 640 L870 640 L871 640 L871 640 L872 640 L872 640 L873 640 L873 640 L874 640 L874 641 L875 641 L875 641 L876 641 L876 642 L877 642 L877 641 L878 641 L878 641 L879 641 L879 641 L880 641 L880 642 L881 642 L881 641 L882 641 L882 641 L883 641 L883 641 L884 641 L884 641 L885 641 L885 641 L886 641 L886 642 L887 642 L887 641 L888 641 L888 642 L889 642 L889 642 L890 642 L890 641 L891 641 L891 642 L892 642 L892 641 L893 641 L893 642 L894 642 L894 642 L895 642 L895 641 L896 641 L896 641 L897 641 L897 641 L898 641 L898 641 L899 641 L899 641 L900 641 L900 641 L901 641 L901 640 L902 640 L902 641 L903 641 L903 641 L904 641 L904 640 L905 640 L905 640 L906 640 L906 639 L907 639 L907 640 L908 640 L908 638 L909 638 L909 638 L910 638 L910 638 L911 638 L911 638 L912 638 L912 638 L913 638 L913 637 L914 637 L914 637 L915 637 L915 636 L916 636 L916 637 L917 637 L917 635 L918 635 L918 636 L919 636 L919 636 L920 636 L920 648 L919 648 L919 648 L918 648 L918 648 L917 648 L917 648 L916 648 L916 648 L915 648 L915 648 L914 648 L914 648 L913 648 L913 648 L912 648 L912 648 L911 648 L911 648 L910 648 L910 648 L909 648 L909 648 L908 648 L908 648 L907 648 L907 648 L906 648 L906 648 L905 648 L905 648 L904 648 L904 648 L903 648 L903 648 L902 648 L902 648 L901 648 L901 648 L900 648 L900 648 L899 648 L899 648 L898 648 L898 648 L897 648 L897 648 L896 648 L896 648 L895 648 L895 648 L894 648 L894 648 L893 648 L893 648 L892 648 L892 648 L891 648 L891 648 L890 648 L890 648 L889 648 L889 648 L888 648 L888 648 L887 648 L887 648 L886 648 L886 648 L885 648 L885 648 L884 648 L884 648 L883 648 L883 648 L882 648 L882 648 L881 648 L881 648 L880 648 L880 648 L879 648 L879 648 L878 648 L878 648 L877 648 L877 648 L876 648 L876 648 L875 648 L875 648 L874 648 L874 648 L873 648 L873 648 L872 648 L872 648 L871 648 L871 648 L870 648 L870 648 L869 648 L869 648 L868 648 L868 648 L867 648 L867 648 L866 648 L866 648 L865 648 L865 648 L864 648 L864 648 L863 648 L863 648 L862 648 L862 648 L861 648 L861 648 L860 648 L860 648 L859 648 L859 648 L858 648 L858 648 L857 648 L857 648 L856 648 L856 648 L855 648 L855 648 L854 648 L854 648 L853 648 L853 648 L852 648 L852 648 L851 648 L851 648 L850 648 L850 648 L849 648 L849 648 L848 648 L848 648 L847 648 L847 648 L846 648 L846 648 L845 648 L845 648 L844 648 L844 648 L843 648 L843 648 L842 648 L842 648 L841 648 L841 648 L840 648 L840 648 L839 648 L839 648 L838 648 L838 648 L837 648 L837 648 L836 648 L836 648 L835 648 L835 648 L834 648 L834 648 L833 648 L833 648 L832 648 L832 648 L831 648 L831 648 L830 648 L830 648 L829 648 L829 648 L828 648 L828 648 L827 648 L827 648 L826 648 L826 648 L825 648 L825 648 L824 648 L824 648 L823 648 L823 648 L822 648 L822 648 L821 648 L821 648 L820 648 L820 648 L819 648 L819 648 L818 648 L818 648 L817 648 L817 648 L816 648 L816 648 L815 648 L815 648 L814 648 L814 648 L813 648 L813 648 L812 648 L812 648 L811 648 L811 648 L810 648 L810 648 L809 648 L809 648 L808 648 L808 648 L807 648 L807 648 L806 648 L806 648 L805 648 L805 648 L804 648 L804 648 L803 648 L803 648 L802 648 L802 648 L801 648 L801 648 L800 648 L800 648 L799 648 L799 648 L798 648 L798 648 L797 648 L797 648 L796 648 L796 648 L795 648 L795 648 L794 648 L794 648 L793 648 L793 648 L792 648 L792 648 L791 648 L791 648 L790 648 L790 648 L789 648 L789 648 L788 648 L788 648 L787 648 L787 648 L786 648 L786 648 L785 648 L785 648 L784 648 L784 648 L783 648 L783 648 L782 648 L782 648 L781 648 L781 648 L780 648 L780 648 L779 648 L779 648 L778 648Z" fill="#0000FF"/>
<g stroke="#2030C0" fill="none" stroke-width="1"><use href="#x" x="786" y="640"/><use href="#x" x="876" y="639"/></g>
<rect x="964" y="152" width="285" height="17" fill="#fff"/>
<rect x="964" y="172" width="285" height="17" fill="#fff"/>
<rect x="964" y="192" width="285" height="17" fill="#fff"/>
<rect x="964" y="212" width="285" height="17" fill="#fff"/>
<rect x="964" y="232" width="285" height="17" fill="#fff"/>
<rect x="964" y="252" width="285" height="17" fill="#fff"/>
<rect x="964" y="272" width="285" height="17" fill="#fff"/>
<rect x="964" y="292" width="285" height="17" fill="#fff"/>
<rect x="964" y="312" width="285" height="17" fill="#fff"/>
<rect x="964" y="332" width="285" height="17" fill="#fff"/>
<rect x="964" y="352" width="285" height="17" fill="#fff"/>
<rect x="964" y="372" width="285" height="17" fill="#fff"/>
<rect x="964" y="392" width="285" height="17" fill="#fff"/>
<rect x="964" y="412" width="285" height="17" fill="#fff"/>
<rect x="964" y="432" width="285" height="17" fill="#fff"/>
<rect x="964" y="452" width="285" height="17" fill="#fff"/>
<rect x="964" y="472" width="285" height="17" fill="#fff"/>
<rect x="964" y="492" width="285" height="17" fill="#fff"/>
<rect x="964" y="512" width="285" height="17" fill="#fff"/>
<rect x="964" y="532" width="285" height="17" fill="#fff"/>
<rect x="964" y="552" width="285" height="17" fill="#fff"/>
<rect x="964" y="572" width="285" height="17" fill="#fff"/>
<rect x="964" y="592" width="285" height="17" fill="#fff"/>
<rect x="964" y="612" width="285" height="17" fill="#fff"/>
<rect x="964" y="632" width="285" height="17" fill="#fff"/>
<rect x="964" y="652" width="285" height="17" fill="#fff"/>
<rect x="964" y="672" width="285" height="8" fill="#fff"/>
<rect x="968" y="592" width="24" height="17" fill="#00FF00"/>
<rect x="992" y="592" width="139" height="17" fill="#FF0000"/>
<rect x="1200" y="592" width="45" height="17" fill="#0000FF"/>
<rect x="968" y="612" width="33" height="17" fill="#00FF00"/>
<rect x="1200" y="612" width="45" height="17" fill="#0000FF"/>
<path d="M968 152h2v17h-2zM968 292h2v17h-2zM968 332h2v17h-2zM968 352h2v17h-2zM968 372h2v17h-2zM968 392h2v17h-2zM968 412h2v17h-2zM968 452h2v17h-2zM968 472h2v17h-2zM968 492h2v17h-2zM968 512h2v17h-2zM968 572h2v17h-2z" fill="#0000D8"/>
<path d="M987 163h2v2h-2zM970 156h2v2h-2zM984 154h2v2h-2zM980 157h2v2h-2zM983 162h2v2h-2zM984 153h2v2h-2zM976 152h2v2h-2zM981 165h2v2h-2zM976 155h2v2h-2zM971 154h2v2h-2zM983 164h2v2h-2zM975 158h2v2h-2zM984 163h2v2h-2zM973 164h2v2h-2zM972 154h2v2h-2zM970 157h2v2h-2zM988 160h2v2h-2zM984 155h2v2h-2zM982 166h2v2h-2zM973 152h2v2h-2zM980 163h2v2h-2zM970 155h2v2h-2zM980 165h2v2h-2zM986 155h2v2h-2zM972 161h2v2h-2zM985 155h2v2h-2zM972 159h2v2h-2zM973 154h2v2h-2zM985 161h2v2h-2zM978 163h2v2h-2zM976 159h2v2h-2zM987 165h2v2h-2zM983 153h2v2h-2zM975 166h2v2h-2zM974 155h2v2h-2zM983 156h2v2h-2zM972 156h2v2h-2zM973 157h2v2h-2zM982 155h2v2h-2zM982 152h2v2h-2zM976 156h2v2h-2zM972 164h2v2h-2zM974 161h2v2h-2zM985 152h2v2h-2zM981 155h2v2h-2zM984 161h2v2h-2zM986 153h2v2h-2zM981 165h2v2h-2zM978 154h2v2h-2zM975 160h2v2h-2zM986 155h2v2h-2zM982 162h2v2h-2zM984 158h2v2h-2zM986 156h2v2h-2zM987 155h2v2h-2zM981 161h2v2h-2zM977 160h2v2h-2zM976 163h2v2h-2zM972 165h2v2h-2zM984 164h2v2h-2zM980 165h2v2h-2zM979 166h2v2h-2zM972 153h2v2h-2zM978 153h2v2h-2zM974 164h2v2h-2zM986 162h2v2h-2zM981 159h2v2h-2zM972 163h2v2h-2zM971 162h2v2h-2zM980 167h2v2h-2zM976 167h2v2h-2zM970 163h2v2h-2zM982 155h2v2h-2zM970 163h2v2h-2zM976 163h2v2h-2zM988 163h2v2h-2zM978 158h2v2h-2zM988 153h2v2h-2zM979 157h2v2h-2zM984 155h2v2h-2zM985 163h2v2h-2zM971 154h2v2h-2zM975 160h2v2h-2zM987 160h2v2h-2zM982 163h2v2h-2zM981 154h2v2h-2zM978 155h2v2h-2zM972 164h2v2h-2zM976 160h2v2h-2zM979 153h2v2h-2zM979 156h2v2h-2zM973 161h2v2h-2zM978 153h2v2h-2zM984 153h2v2h-2zM981 154h2v2h-2zM986 156h2v2h-2zM979 152h2v2h-2zM988 158h2v2h-2zM987 152h2v2h-2zM984 165h2v2h-2zM979 154h2v2h-2zM974 154h2v2h-2zM983 156h2v2h-2zM981 166h2v2h-2zM982 155h2v2h-2zM983 162h2v2h-2zM972 155h2v2h-2zM980 155h2v2h-2zM972 164h2v2h-2zM978 155h2v2h-2zM975 155h2v2h-2zM982 162h2v2h-2zM986 156h2v2h-2zM972 156h2v2h-2zM977 167h2v2h-2zM982 153h2v2h-2zM982 164h2v2h-2zM975 167h2v2h-2zM984 165h2v2h-2zM981 167h2v2h-2zM972 157h2v2h-2zM987 162h2v2h-2zM975 152h2v2h-2zM980 157h2v2h-2zM980 164h2v2h-2zM987 164h2v2h-2zM983 166h2v2h-2zM980 156h2v2h-2zM984 164h2v2h-2zM979 154h2v2h-2zM984 159h2v2h-2zM977 163h2v2h-2zM982 153h2v2h-2zM977 154h2v2h-2zM977 164h2v2h-2zM976 158h2v2h-2zM982 154h2v2h-2zM986 157h2v2h-2zM982 166h2v2h-2zM981 167h2v2h-2zM972 159h2v2h-2zM974 155h2v2h-2zM978 156h2v2h-2zM971 163h2v2h-2zM987 157h2v2h-2zM986 167h2v2h-2zM979 167h2v2h-2zM973 166h2v2h-2zM980 161h2v2h-2zM972 159h2v2h-2zM1005 156h2v2h-2zM996 158h2v2h-2zM1006 163h2v2h-2zM994 157h2v2h-2zM1005 158h2v2h-2zM1002 157h2v2h-2zM1007 163h2v2h-2zM1004 162h2v2h-2zM998 155h2v2h-2zM1005 161h2v2h-2zM1002 160h2v2h-2zM994 159h2v2h-2zM998 152h2v2h-2zM995 160h2v2h-2zM1003 161h2v2h-2zM997 160h2v2h-2zM1001 156h2v2h-2zM997 167h2v2h-2zM994 160h2v2h-2zM993 161h2v2h-2zM1005 160h2v2h-2zM1001 156h2v2h-2zM1006 164h2v2h-2zM995 156h2v2h-2zM1002 154h2v2h-2zM1001 157h2v2h-2zM1001 160h2v2h-2zM997 153h2v2h-2zM999 163h2v2h-2zM1003 159h2v2h-2zM1000 166h2v2h-2zM1003 163h2v2h-2zM998 158h2v2h-2zM1003 160h2v2h-2zM1002 163h2v2h-2zM1007 159h2v2h-2zM994 155h2v2h-2zM1002 154h2v2h-2zM1013 152h2v2h-2zM1010 155h2v2h-2zM1012 163h2v2h-2zM1013 163h2v2h-2zM1022 156h2v2h-2zM1009 154h2v2h-2zM1011 152h2v2h-2zM1015 156h2v2h-2zM1019 154h2v2h-2zM1015 157h2v2h-2zM1010 163h2v2h-2zM1018 167h2v2h-2zM1012 155h2v2h-2zM1015 156h2v2h-2zM1016 158h2v2h-2zM1010 167h2v2h-2zM1009 154h2v2h-2zM1011 161h2v2h-2zM1013 162h2v2h-2zM1012 160h2v2h-2zM1011 156h2v2h-2zM1022 165h2v2h-2zM1021 152h2v2h-2zM1018 167h2v2h-2zM1021 162h2v2h-2zM1011 154h2v2h-2zM1021 157h2v2h-2zM1009 155h2v2h-2zM1010 161h2v2h-2zM1022 161h2v2h-2zM1241 173h2v2h-2zM1242 174h2v2h-2zM1245 175h2v2h-2zM1241 176h2v2h-2zM1241 178h2v2h-2zM1245 179h2v2h-2zM1242 180h2v2h-2zM1244 181h2v2h-2zM1242 183h2v2h-2zM1241 184h2v2h-2zM1244 185h2v2h-2zM1245 186h2v2h-2zM979 198h2v2h-2zM980 201h2v2h-2zM982 194h2v2h-2zM981 192h2v2h-2zM974 207h2v2h-2zM974 204h2v2h-2zM975 205h2v2h-2zM988 197h2v2h-2zM976 194h2v2h-2zM977 197h2v2h-2zM988 207h2v2h-2zM977 202h2v2h-2zM979 196h2v2h-2zM988 196h2v2h-2zM976 202h2v2h-2zM974 198h2v2h-2zM977 196h2v2h-2zM985 199h2v2h-2zM988 206h2v2h-2zM979 203h2v2h-2zM985 195h2v2h-2zM988 200h2v2h-2zM976 194h2v2h-2zM976 203h2v2h-2zM984 193h2v2h-2zM975 201h2v2h-2zM979 197h2v2h-2zM983 195h2v2h-2zM978 206h2v2h-2zM986 200h2v2h-2zM975 194h2v2h-2zM984 199h2v2h-2zM974 194h2v2h-2zM988 201h2v2h-2zM986 197h2v2h-2zM976 202h2v2h-2zM984 195h2v2h-2zM978 207h2v2h-2zM986 206h2v2h-2zM979 207h2v2h-2zM981 193h2v2h-2zM977 196h2v2h-2zM981 192h2v2h-2zM981 204h2v2h-2zM982 193h2v2h-2zM978 197h2v2h-2zM974 197h2v2h-2zM980 198h2v2h-2zM974 192h2v2h-2zM977 205h2v2h-2zM986 207h2v2h-2zM983 194h2v2h-2zM981 192h2v2h-2zM976 202h2v2h-2zM974 197h2v2h-2zM978 193h2v2h-2zM979 200h2v2h-2zM987 203h2v2h-2zM985 207h2v2h-2zM978 202h2v2h-2zM976 203h2v2h-2zM976 205h2v2h-2zM980 206h2v2h-2zM978 202h2v2h-2zM988 207h2v2h-2zM977 197h2v2h-2zM981 201h2v2h-2zM986 197h2v2h-2zM988 202h2v2h-2zM977 204h2v2h-2zM976 202h2v2h-2zM978 195h2v2h-2zM984 192h2v2h-2zM979 207h2v2h-2zM982 195h2v2h-2zM981 204h2v2h-2zM984 192h2v2h-2zM984 207h2v2h-2zM980 200h2v2h-2zM981 206h2v2h-2zM974 194h2v2h-2zM979 207h2v2h-2zM984 207h2v2h-2zM974 196h2v2h-2zM974 200h2v2h-2zM982 206h2v2h-2zM974 194h2v2h-2zM978 193h2v2h-2zM977 204h2v2h-2zM986 193h2v2h-2zM978 198h2v2h-2zM988 195h2v2h-2zM980 203h2v2h-2zM982 193h2v2h-2zM975 207h2v2h-2zM987 207h2v2h-2zM976 201h2v2h-2zM979 202h2v2h-2zM988 198h2v2h-2zM984 198h2v2h-2zM985 206h2v2h-2zM986 201h2v2h-2zM984 196h2v2h-2zM984 199h2v2h-2zM986 200h2v2h-2zM986 201h2v2h-2zM986 197h2v2h-2zM975 207h2v2h-2zM978 199h2v2h-2zM974 192h2v2h-2zM1008 202h2v2h-2zM1007 204h2v2h-2zM1010 194h2v2h-2zM1010 197h2v2h-2zM1001 200h2v2h-2zM1004 204h2v2h-2zM1004 200h2v2h-2zM1002 200h2v2h-2zM1011 196h2v2h-2zM1011 193h2v2h-2zM1006 205h2v2h-2zM1012 204h2v2h-2zM1012 192h2v2h-2zM1009 200h2v2h-2zM1007 207h2v2h-2zM1003 204h2v2h-2zM1011 203h2v2h-2zM1000 192h2v2h-2zM1002 207h2v2h-2zM1012 199h2v2h-2zM1003 195h2v2h-2zM1011 196h2v2h-2zM1008 205h2v2h-2zM1005 206h2v2h-2zM1004 197h2v2h-2zM1000 200h2v2h-2zM1010 195h2v2h-2zM1005 202h2v2h-2zM1000 192h2v2h-2zM1004 201h2v2h-2zM1007 193h2v2h-2zM1005 195h2v2h-2zM1004 198h2v2h-2zM1008 207h2v2h-2zM1001 193h2v2h-2zM1001 193h2v2h-2zM1007 199h2v2h-2zM1004 198h2v2h-2zM1009 203h2v2h-2zM1003 205h2v2h-2zM1005 204h2v2h-2zM1001 202h2v2h-2zM1000 203h2v2h-2zM1004 205h2v2h-2zM1003 205h2v2h-2zM1003 207h2v2h-2zM1001 195h2v2h-2zM1006 205h2v2h-2zM1007 205h2v2h-2zM1012 200h2v2h-2zM1009 205h2v2h-2zM1000 194h2v2h-2zM1003 197h2v2h-2zM1012 193h2v2h-2zM1009 196h2v2h-2zM1002 200h2v2h-2zM1012 202h2v2h-2zM1004 193h2v2h-2zM1011 193h2v2h-2zM1007 193h2v2h-2zM1006 195h2v2h-2zM1007 198h2v2h-2zM1004 193h2v2h-2zM1008 194h2v2h-2zM1000 200h2v2h-2zM1007 206h2v2h-2zM1002 205h2v2h-2zM1007 199h2v2h-2zM1006 199h2v2h-2zM1010 205h2v2h-2zM1000 194h2v2h-2zM1011 196h2v2h-2zM1003 193h2v2h-2zM1009 207h2v2h-2zM1006 192h2v2h-2zM1006 194h2v2h-2zM1011 204h2v2h-2zM1011 206h2v2h-2zM1009 195h2v2h-2zM1003 199h2v2h-2zM1028 207h2v2h-2zM1026 202h2v2h-2zM1027 195h2v2h-2zM1022 201h2v2h-2zM1017 199h2v2h-2zM1028 205h2v2h-2zM972 232h2v2h-2zM970 239h2v2h-2zM967 232h2v2h-2zM971 237h2v2h-2zM972 234h2v2h-2zM968 243h2v2h-2zM968 234h2v2h-2zM971 243h2v2h-2zM967 243h2v2h-2zM972 243h2v2h-2zM970 239h2v2h-2zM972 233h2v2h-2zM972 242h2v2h-2zM969 246h2v2h-2zM972 241h2v2h-2zM972 245h2v2h-2zM970 238h2v2h-2zM967 246h2v2h-2zM970 240h2v2h-2zM970 237h2v2h-2zM971 240h2v2h-2zM967 236h2v2h-2zM969 243h2v2h-2zM972 235h2v2h-2zM972 241h2v2h-2zM967 246h2v2h-2zM971 245h2v2h-2zM972 240h2v2h-2zM970 247h2v2h-2zM970 247h2v2h-2zM972 243h2v2h-2zM967 235h2v2h-2zM967 244h2v2h-2zM971 234h2v2h-2zM972 236h2v2h-2zM970 236h2v2h-2zM971 245h2v2h-2zM967 239h2v2h-2zM972 236h2v2h-2zM970 241h2v2h-2zM969 243h2v2h-2zM970 238h2v2h-2zM968 252h2v2h-2zM972 267h2v2h-2zM972 256h2v2h-2zM972 256h2v2h-2zM971 254h2v2h-2zM985 256h2v2h-2zM973 262h2v2h-2zM981 257h2v2h-2zM986 253h2v2h-2zM976 253h2v2h-2zM977 256h2v2h-2zM980 254h2v2h-2zM971 253h2v2h-2zM987 262h2v2h-2zM982 264h2v2h-2zM973 253h2v2h-2zM986 257h2v2h-2zM982 267h2v2h-2zM976 261h2v2h-2zM980 258h2v2h-2zM987 254h2v2h-2zM980 257h2v2h-2zM981 257h2v2h-2zM977 253h2v2h-2zM980 253h2v2h-2zM983 259h2v2h-2zM972 261h2v2h-2zM974 257h2v2h-2zM984 262h2v2h-2zM972 260h2v2h-2zM974 262h2v2h-2zM980 259h2v2h-2zM981 254h2v2h-2zM971 255h2v2h-2zM974 257h2v2h-2zM974 265h2v2h-2zM982 267h2v2h-2zM978 258h2v2h-2zM978 254h2v2h-2zM972 259h2v2h-2zM986 259h2v2h-2zM972 254h2v2h-2zM983 265h2v2h-2zM980 259h2v2h-2zM987 263h2v2h-2zM980 263h2v2h-2zM971 260h2v2h-2zM978 266h2v2h-2zM978 260h2v2h-2zM972 261h2v2h-2zM979 253h2v2h-2zM975 264h2v2h-2zM977 255h2v2h-2zM972 261h2v2h-2zM985 264h2v2h-2zM987 255h2v2h-2zM972 254h2v2h-2zM984 260h2v2h-2zM982 259h2v2h-2zM971 254h2v2h-2zM978 267h2v2h-2zM973 261h2v2h-2zM980 260h2v2h-2zM976 267h2v2h-2zM968 258h2v2h-2zM987 262h2v2h-2zM982 258h2v2h-2zM968 255h2v2h-2zM980 254h2v2h-2zM970 252h2v2h-2zM974 266h2v2h-2zM981 267h2v2h-2zM977 262h2v2h-2zM969 265h2v2h-2zM981 263h2v2h-2zM975 256h2v2h-2zM978 255h2v2h-2zM972 262h2v2h-2zM987 254h2v2h-2zM972 255h2v2h-2zM983 254h2v2h-2zM972 265h2v2h-2zM986 257h2v2h-2zM976 262h2v2h-2zM985 261h2v2h-2zM976 254h2v2h-2zM981 253h2v2h-2zM982 256h2v2h-2zM977 255h2v2h-2zM972 265h2v2h-2zM983 266h2v2h-2zM970 256h2v2h-2zM969 257h2v2h-2zM976 255h2v2h-2zM981 256h2v2h-2zM981 257h2v2h-2zM985 260h2v2h-2zM987 262h2v2h-2zM971 262h2v2h-2zM980 252h2v2h-2zM982 264h2v2h-2zM970 258h2v2h-2zM970 263h2v2h-2zM975 257h2v2h-2zM980 262h2v2h-2zM983 258h2v2h-2zM980 266h2v2h-2zM969 260h2v2h-2zM969 266h2v2h-2zM971 256h2v2h-2zM986 258h2v2h-2zM985 267h2v2h-2zM968 258h2v2h-2zM987 264h2v2h-2zM987 257h2v2h-2zM982 266h2v2h-2zM972 267h2v2h-2zM985 258h2v2h-2zM987 255h2v2h-2zM978 257h2v2h-2zM980 259h2v2h-2zM970 252h2v2h-2zM982 256h2v2h-2zM978 254h2v2h-2zM974 261h2v2h-2zM987 263h2v2h-2zM980 266h2v2h-2zM968 266h2v2h-2zM978 266h2v2h-2zM983 262h2v2h-2zM985 256h2v2h-2zM972 253h2v2h-2zM983 264h2v2h-2zM985 263h2v2h-2zM969 254h2v2h-2zM980 259h2v2h-2zM978 252h2v2h-2zM970 262h2v2h-2zM974 263h2v2h-2zM971 261h2v2h-2zM972 253h2v2h-2zM985 264h2v2h-2zM977 257h2v2h-2zM972 255h2v2h-2zM977 252h2v2h-2zM981 259h2v2h-2zM972 254h2v2h-2zM973 258h2v2h-2zM979 262h2v2h-2zM982 254h2v2h-2zM976 253h2v2h-2zM981 267h2v2h-2zM978 254h2v2h-2zM982 255h2v2h-2zM975 254h2v2h-2zM976 262h2v2h-2zM983 255h2v2h-2zM972 262h2v2h-2zM973 259h2v2h-2zM971 266h2v2h-2zM976 266h2v2h-2zM970 262h2v2h-2zM973 254h2v2h-2zM980 253h2v2h-2zM969 261h2v2h-2zM976 261h2v2h-2zM980 264h2v2h-2zM970 265h2v2h-2zM970 265h2v2h-2zM974 264h2v2h-2zM986 262h2v2h-2zM981 259h2v2h-2zM982 254h2v2h-2zM969 261h2v2h-2zM980 260h2v2h-2zM984 261h2v2h-2zM979 261h2v2h-2zM978 252h2v2h-2zM981 253h2v2h-2zM977 267h2v2h-2zM979 254h2v2h-2zM975 253h2v2h-2zM968 261h2v2h-2zM976 257h2v2h-2zM971 259h2v2h-2zM968 267h2v2h-2zM986 252h2v2h-2zM968 263h2v2h-2zM968 266h2v2h-2zM984 257h2v2h-2zM968 265h2v2h-2zM971 264h2v2h-2zM984 267h2v2h-2zM971 263h2v2h-2zM979 260h2v2h-2zM983 264h2v2h-2zM972 261h2v2h-2zM981 253h2v2h-2zM986 253h2v2h-2zM986 267h2v2h-2zM972 264h2v2h-2zM968 257h2v2h-2zM985 260h2v2h-2zM972 267h2v2h-2zM971 261h2v2h-2zM980 252h2v2h-2zM977 259h2v2h-2zM979 260h2v2h-2zM970 265h2v2h-2zM981 253h2v2h-2zM985 254h2v2h-2zM969 266h2v2h-2zM982 259h2v2h-2zM977 257h2v2h-2zM971 264h2v2h-2zM981 255h2v2h-2zM981 256h2v2h-2zM975 255h2v2h-2zM972 262h2v2h-2zM979 265h2v2h-2zM983 267h2v2h-2zM983 265h2v2h-2zM972 261h2v2h-2zM968 259h2v2h-2zM974 258h2v2h-2zM981 267h2v2h-2zM986 263h2v2h-2zM976 261h2v2h-2zM987 252h2v2h-2zM972 254h2v2h-2zM973 253h2v2h-2zM974 255h2v2h-2zM974 255h2v2h-2zM970 260h2v2h-2zM984 255h2v2h-2zM981 260h2v2h-2zM985 267h2v2h-2zM972 263h2v2h-2zM983 260h2v2h-2zM983 262h2v2h-2zM987 256h2v2h-2zM972 260h2v2h-2zM973 257h2v2h-2zM974 255h2v2h-2zM969 265h2v2h-2zM987 262h2v2h-2zM985 254h2v2h-2zM969 253h2v2h-2zM979 253h2v2h-2zM983 267h2v2h-2zM969 266h2v2h-2zM973 262h2v2h-2zM980 263h2v2h-2zM969 254h2v2h-2zM979 264h2v2h-2zM981 258h2v2h-2zM972 266h2v2h-2zM981 255h2v2h-2zM972 252h2v2h-2zM979 259h2v2h-2zM974 256h2v2h-2zM974 265h2v2h-2zM985 256h2v2h-2zM968 257h2v2h-2zM976 257h2v2h-2zM978 254h2v2h-2zM977 254h2v2h-2zM978 253h2v2h-2zM984 253h2v2h-2zM981 267h2v2h-2zM970 266h2v2h-2zM981 252h2v2h-2zM986 257h2v2h-2zM986 263h2v2h-2zM978 253h2v2h-2zM968 262h2v2h-2zM986 267h2v2h-2zM982 258h2v2h-2zM969 258h2v2h-2zM981 264h2v2h-2zM968 262h2v2h-2zM978 253h2v2h-2zM985 264h2v2h-2zM977 260h2v2h-2zM970 255h2v2h-2zM985 261h2v2h-2zM979 255h2v2h-2zM970 265h2v2h-2zM978 253h2v2h-2zM977 258h2v2h-2zM985 261h2v2h-2zM974 262h2v2h-2zM968 261h2v2h-2zM980 261h2v2h-2zM977 267h2v2h-2zM983 260h2v2h-2zM984 263h2v2h-2zM970 265h2v2h-2zM978 261h2v2h-2zM986 256h2v2h-2zM976 264h2v2h-2zM969 263h2v2h-2zM972 259h2v2h-2zM971 257h2v2h-2zM985 255h2v2h-2zM986 266h2v2h-2zM986 266h2v2h-2zM972 264h2v2h-2zM977 260h2v2h-2zM969 266h2v2h-2zM979 254h2v2h-2zM968 260h2v2h-2zM971 258h2v2h-2zM972 261h2v2h-2zM981 265h2v2h-2zM977 258h2v2h-2zM975 263h2v2h-2zM970 254h2v2h-2zM982 255h2v2h-2zM983 256h2v2h-2zM974 252h2v2h-2zM972 253h2v2h-2zM982 266h2v2h-2zM982 252h2v2h-2zM981 260h2v2h-2zM969 252h2v2h-2zM981 255h2v2h-2zM977 257h2v2h-2zM980 262h2v2h-2zM985 256h2v2h-2zM1000 260h2v2h-2zM996 261h2v2h-2zM998 254h2v2h-2zM999 263h2v2h-2zM993 258h2v2h-2zM987 255h2v2h-2zM989 267h2v2h-2zM988 267h2v2h-2zM992 253h2v2h-2zM997 264h2v2h-2zM996 260h2v2h-2zM994 254h2v2h-2zM994 252h2v2h-2zM991 252h2v2h-2zM992 267h2v2h-2zM1000 265h2v2h-2zM998 262h2v2h-2zM996 258h2v2h-2zM1000 255h2v2h-2zM1001 252h2v2h-2zM998 253h2v2h-2zM994 256h2v2h-2zM1006 262h2v2h-2zM1005 259h2v2h-2zM1008 256h2v2h-2zM1015 267h2v2h-2zM1002 258h2v2h-2zM1016 267h2v2h-2zM1000 263h2v2h-2zM1005 254h2v2h-2zM1008 594h2v2h-2zM1002 606h2v2h-2zM993 605h2v2h-2zM1006 598h2v2h-2zM993 604h2v2h-2zM1005 606h2v2h-2zM992 595h2v2h-2zM1009 605h2v2h-2zM995 606h2v2h-2zM993 596h2v2h-2zM994 594h2v2h-2zM1011 605h2v2h-2zM994 596h2v2h-2zM994 594h2v2h-2zM1010 594h2v2h-2zM1005 597h2v2h-2zM999 593h2v2h-2zM991 598h2v2h-2zM1002 605h2v2h-2zM994 596h2v2h-2zM1009 594h2v2h-2zM999 597h2v2h-2zM992 598h2v2h-2zM1008 603h2v2h-2zM1004 598h2v2h-2zM1006 598h2v2h-2zM997 592h2v2h-2zM1004 592h2v2h-2zM993 604h2v2h-2zM995 592h2v2h-2zM1051 602h2v2h-2zM1069 599h2v2h-2zM1064 607h2v2h-2zM1070 603h2v2h-2zM1068 600h2v2h-2zM1053 593h2v2h-2z" fill="#00FF00"/>
<path d="M1027 165h2v2h-2zM1028 156h2v2h-2zM1032 154h2v2h-2zM1027 163h2v2h-2zM1029 158h2v2h-2zM1039 159h2v2h-2zM1040 163h2v2h-2zM1037 159h2v2h-2zM1038 164h2v2h-2zM1027 159h2v2h-2zM1035 153h2v2h-2zM1045 163h2v2h-2zM1043 162h2v2h-2zM1043 163h2v2h-2zM1041 159h2v2h-2zM1040 157h2v2h-2z" fill="#11EE22"/>
<path d="M1059 155h2v2h-2zM1065 153h2v2h-2zM1074 155h2v2h-2zM1086 158h2v2h-2zM1092 161h2v2h-2zM1104 162h2v2h-2zM1112 157h2v2h-2zM1122 160h2v2h-2zM1130 157h2v2h-2zM1130 164h2v2h-2zM1152 161h2v2h-2zM1191 155h2v2h-2zM1195 156h2v2h-2zM1099 160h2v2h-2zM1026 264h2v2h-2zM1044 263h2v2h-2zM1074 260h2v2h-2zM1098 261h2v2h-2zM1117 253h2v2h-2zM1122 257h2v2h-2zM1125 258h2v2h-2zM1163 264h2v2h-2zM1243 262h2v2h-2zM1053 616h2v2h-2zM1004 619h2v2h-2zM1010 620h2v2h-2zM1017 612h2v2h-2zM1059 623h2v2h-2zM1026 626h2v2h-2zM1015 612h2v2h-2zM1030 624h2v2h-2zM1015 615h2v2h-2zM1024 622h2v2h-2zM1043 625h2v2h-2zM1019 614h2v2h-2zM1032 623h2v2h-2zM1053 624h2v2h-2zM1013 623h2v2h-2zM999 627h2v2h-2zM1018 616h2v2h-2zM1028 620h2v2h-2zM1055 624h2v2h-2zM1000 619h2v2h-2zM1019 625h2v2h-2zM1044 625h2v2h-2zM1032 623h2v2h-2zM1034 615h2v2h-2zM1030 627h2v2h-2zM1037 620h2v2h-2zM1047 621h2v2h-2zM1026 627h2v2h-2zM1004 623h2v2h-2zM1008 615h2v2h-2zM1024 619h2v2h-2zM1053 616h2v2h-2zM1046 612h2v2h-2zM1007 621h2v2h-2zM1022 612h2v2h-2zM1047 627h2v2h-2zM1041 617h2v2h-2zM1001 626h2v2h-2zM1003 626h2v2h-2zM1013 612h2v2h-2zM1048 619h2v2h-2zM1028 612h2v2h-2zM1050 617h2v2h-2zM1032 617h2v2h-2zM1013 614h2v2h-2zM1048 618h2v2h-2zM1017 627h2v2h-2zM1028 625h2v2h-2zM1039 627h2v2h-2zM1025 626h2v2h-2zM1052 623h2v2h-2zM1055 618h2v2h-2zM1004 619h2v2h-2zM1036 615h2v2h-2zM1003 621h2v2h-2zM1014 616h2v2h-2zM1034 625h2v2h-2zM1037 623h2v2h-2zM1026 619h2v2h-2zM1010 621h2v2h-2zM1127 616h2v2h-2zM1068 614h2v2h-2zM1094 612h2v2h-2zM1078 614h2v2h-2zM1097 623h2v2h-2zM1125 617h2v2h-2zM1123 615h2v2h-2zM1107 619h2v2h-2zM1122 622h2v2h-2zM1096 616h2v2h-2zM1116 620h2v2h-2zM1066 625h2v2h-2zM1120 624h2v2h-2zM1067 617h2v2h-2zM1125 621h2v2h-2zM1129 614h2v2h-2zM1106 627h2v2h-2zM1064 622h2v2h-2zM1118 619h2v2h-2zM1085 616h2v2h-2zM1129 620h2v2h-2zM1091 627h2v2h-2zM1020 635h2v2h-2zM1054 633h2v2h-2zM1022 645h2v2h-2zM989 639h2v2h-2zM1007 634h2v2h-2zM1072 644h2v2h-2zM1063 638h2v2h-2zM1023 647h2v2h-2zM975 637h2v2h-2zM1014 633h2v2h-2zM1068 637h2v2h-2zM1022 639h2v2h-2zM1071 646h2v2h-2zM1008 637h2v2h-2z" fill="#22CC44"/>
<path d="M1146 162h2v2h-2zM1221 163h2v2h-2zM1227 164h2v2h-2zM1242 214h2v2h-2zM1179 596h2v2h-2zM1173 607h2v2h-2zM1143 634h2v2h-2zM1140 639h2v2h-2zM1167 639h2v2h-2zM1104 654h2v2h-2zM1223 661h2v2h-2zM1228 655h2v2h-2zM970 672h2v2h-2zM1039 678h2v2h-2zM1066 673h2v2h-2zM1067 678h2v2h-2z" fill="#B20000"/>
<path d="M966 173h2v2h-2zM966 174h2v2h-2zM966 175h2v2h-2zM967 176h2v2h-2zM968 178h2v2h-2zM968 179h2v2h-2zM966 180h2v2h-2zM971 181h2v2h-2zM967 183h2v2h-2zM966 184h2v2h-2zM966 185h2v2h-2zM970 186h2v2h-2zM971 173h2v2h-2zM970 175h2v2h-2zM968 178h2v2h-2zM970 180h2v2h-2zM970 183h2v2h-2zM970 185h2v2h-2z" fill="#0000CC"/>
<path d="M1104 173h2v2h-2zM1106 174h2v2h-2zM1102 176h2v2h-2zM1103 178h2v2h-2zM1104 179h2v2h-2zM1103 181h2v2h-2zM1102 183h2v2h-2zM1104 184h2v2h-2zM1106 186h2v2h-2zM1080 193h2v2h-2zM1079 196h2v2h-2zM1081 199h2v2h-2zM1081 202h2v2h-2zM1081 205h2v2h-2zM1087 193h2v2h-2zM1085 196h2v2h-2zM1084 199h2v2h-2zM1086 202h2v2h-2zM1085 205h2v2h-2zM1093 193h2v2h-2zM1090 196h2v2h-2zM1091 199h2v2h-2zM1092 202h2v2h-2zM1092 205h2v2h-2zM1101 193h2v2h-2zM1097 196h2v2h-2zM1098 199h2v2h-2zM1097 202h2v2h-2zM1100 205h2v2h-2zM1109 193h2v2h-2zM1107 196h2v2h-2zM1106 199h2v2h-2zM1107 202h2v2h-2zM1109 205h2v2h-2zM1117 193h2v2h-2zM1115 196h2v2h-2zM1116 199h2v2h-2zM1117 202h2v2h-2zM1114 205h2v2h-2zM1152 197h2v2h-2zM1165 198h2v2h-2zM1188 200h2v2h-2zM1144 204h2v2h-2zM1072 214h2v2h-2zM1070 217h2v2h-2zM1068 221h2v2h-2zM1209 222h2v2h-2zM978 243h2v2h-2zM985 242h2v2h-2z" fill="#22CC22"/>
<path d="M1105 173h2v2h-2zM1106 176h2v2h-2zM1106 179h2v2h-2zM1104 182h2v2h-2zM1106 185h2v2h-2zM979 601h2v2h-2zM987 593h2v2h-2zM977 603h2v2h-2zM990 594h2v2h-2zM990 603h2v2h-2zM977 598h2v2h-2zM983 599h2v2h-2zM986 599h2v2h-2zM978 603h2v2h-2zM985 601h2v2h-2zM977 596h2v2h-2zM984 595h2v2h-2z" fill="#CC2200"/>
<path d="M966 193h2v2h-2zM967 194h2v2h-2zM970 195h2v2h-2zM967 196h2v2h-2zM965 197h2v2h-2zM965 198h2v2h-2zM971 199h2v2h-2zM968 200h2v2h-2zM966 201h2v2h-2zM968 202h2v2h-2zM971 203h2v2h-2zM970 204h2v2h-2zM971 205h2v2h-2zM966 206h2v2h-2zM970 213h2v2h-2zM970 214h2v2h-2zM968 216h2v2h-2zM966 217h2v2h-2zM966 219h2v2h-2zM966 220h2v2h-2zM966 222h2v2h-2zM968 223h2v2h-2zM968 225h2v2h-2zM969 226h2v2h-2z" fill="#0000DD"/>
<path d="M972 193h2v11h-2z" fill="#CC0000"/>
<path d="M1181 198h2v2h-2zM1108 193h2v2h-2zM1024 200h2v2h-2zM1206 198h2v2h-2zM1164 205h2v2h-2zM1081 206h2v2h-2zM1199 202h2v2h-2zM1085 192h2v2h-2zM1187 201h2v2h-2zM1022 206h2v2h-2zM1219 206h2v2h-2zM1169 204h2v2h-2zM1015 199h2v2h-2zM1128 199h2v2h-2zM1209 205h2v2h-2zM1085 201h2v2h-2zM1092 194h2v2h-2zM1151 204h2v2h-2zM985 205h2v2h-2zM1153 205h2v2h-2zM1109 194h2v2h-2zM1171 199h2v2h-2zM1180 201h2v2h-2zM1077 205h2v2h-2zM1007 207h2v2h-2zM1003 198h2v2h-2zM1177 194h2v2h-2zM1150 203h2v2h-2zM1221 200h2v2h-2zM1108 205h2v2h-2zM1057 192h2v2h-2zM1046 202h2v2h-2zM1237 192h2v2h-2zM1117 202h2v2h-2zM1230 202h2v2h-2zM1062 207h2v2h-2zM1226 201h2v2h-2zM1192 196h2v2h-2zM1027 193h2v2h-2zM1212 206h2v2h-2zM1202 192h2v2h-2zM1125 203h2v2h-2zM1198 193h2v2h-2zM1015 192h2v2h-2zM1130 197h2v2h-2zM1163 198h2v2h-2zM1171 200h2v2h-2zM1051 203h2v2h-2zM1239 192h2v2h-2zM1168 204h2v2h-2zM1184 196h2v2h-2zM1136 199h2v2h-2zM1082 197h2v2h-2zM990 195h2v2h-2zM1020 192h2v2h-2zM1074 200h2v2h-2zM987 207h2v2h-2zM1006 192h2v2h-2zM1126 202h2v2h-2zM1085 203h2v2h-2zM1141 202h2v2h-2zM1088 207h2v2h-2zM1137 192h2v2h-2zM1203 201h2v2h-2zM1235 203h2v2h-2zM1091 199h2v2h-2zM1140 196h2v2h-2zM1151 206h2v2h-2zM1197 197h2v2h-2zM1070 197h2v2h-2zM1219 203h2v2h-2zM1155 198h2v2h-2zM1140 199h2v2h-2zM1222 203h2v2h-2zM1007 199h2v2h-2zM1229 193h2v2h-2zM1009 192h2v2h-2zM1025 202h2v2h-2zM999 203h2v2h-2zM1228 204h2v2h-2zM1009 195h2v2h-2zM1190 192h2v2h-2zM1067 200h2v2h-2zM999 196h2v2h-2zM1142 193h2v2h-2zM1216 201h2v2h-2zM1090 192h2v2h-2zM1159 199h2v2h-2zM1161 192h2v2h-2zM1104 201h2v2h-2zM1130 200h2v2h-2zM984 192h2v2h-2zM1163 201h2v2h-2zM1190 197h2v2h-2zM1114 197h2v2h-2zM1034 197h2v2h-2zM1026 207h2v2h-2zM1239 198h2v2h-2zM1136 206h2v2h-2zM1233 199h2v2h-2zM1188 204h2v2h-2zM1162 200h2v2h-2zM1216 206h2v2h-2zM1091 201h2v2h-2zM988 201h2v2h-2zM1131 204h2v2h-2zM993 193h2v2h-2zM1210 201h2v2h-2zM1074 203h2v2h-2zM1213 203h2v2h-2zM1209 194h2v2h-2zM1180 199h2v2h-2zM1076 194h2v2h-2zM1033 199h2v2h-2zM1148 205h2v2h-2zM1240 201h2v2h-2zM996 201h2v2h-2zM1241 203h2v2h-2zM1015 195h2v2h-2zM983 196h2v2h-2zM1176 195h2v2h-2zM1206 205h2v2h-2zM1005 197h2v2h-2zM1012 206h2v2h-2zM1101 207h2v2h-2zM1087 206h2v2h-2zM1149 192h2v2h-2zM983 199h2v2h-2zM1086 194h2v2h-2zM1101 201h2v2h-2zM1147 197h2v2h-2zM1028 197h2v2h-2zM1111 198h2v2h-2zM1091 197h2v2h-2zM1006 203h2v2h-2zM994 196h2v2h-2zM1080 192h2v2h-2zM1060 207h2v2h-2zM1141 200h2v2h-2zM1071 202h2v2h-2zM1035 192h2v2h-2zM999 201h2v2h-2zM1173 200h2v2h-2zM1175 197h2v2h-2zM1189 207h2v2h-2zM995 199h2v2h-2zM1119 200h2v2h-2zM1079 194h2v2h-2zM1010 200h2v2h-2zM1072 199h2v2h-2zM1172 201h2v2h-2zM1038 204h2v2h-2zM1140 207h2v2h-2zM980 193h2v2h-2zM1187 207h2v2h-2zM1173 195h2v2h-2zM1106 193h2v2h-2zM1036 192h2v2h-2zM1161 203h2v2h-2zM1145 204h2v2h-2zM1052 197h2v2h-2zM1081 192h2v2h-2zM1232 199h2v2h-2zM1206 198h2v2h-2zM1225 193h2v2h-2zM1016 193h2v2h-2zM1043 198h2v2h-2zM1173 206h2v2h-2zM1092 205h2v2h-2zM1169 197h2v2h-2zM1163 193h2v2h-2zM1156 194h2v2h-2zM1052 200h2v2h-2zM1060 193h2v2h-2zM991 199h2v2h-2zM1172 196h2v2h-2zM1021 193h2v2h-2zM1048 202h2v2h-2zM996 195h2v2h-2zM1094 201h2v2h-2zM1069 198h2v2h-2zM1207 195h2v2h-2zM1200 198h2v2h-2zM1014 197h2v2h-2zM1013 197h2v2h-2zM1169 205h2v2h-2zM1053 204h2v2h-2zM1237 195h2v2h-2zM1175 192h2v2h-2zM1219 201h2v2h-2zM997 192h2v2h-2zM1076 202h2v2h-2zM981 205h2v2h-2zM1177 201h2v2h-2zM1123 196h2v2h-2zM1059 204h2v2h-2zM1167 195h2v2h-2zM997 200h2v2h-2zM1122 201h2v2h-2zM1126 199h2v2h-2zM1004 213h2v2h-2zM1000 214h2v2h-2zM1000 216h2v2h-2zM1003 217h2v2h-2zM1001 219h2v2h-2zM1003 220h2v2h-2zM1001 222h2v2h-2zM1003 223h2v2h-2zM1003 225h2v2h-2zM1003 226h2v2h-2zM1036 213h2v2h-2zM1036 214h2v2h-2zM1038 216h2v2h-2zM1037 217h2v2h-2zM1035 219h2v2h-2zM1036 220h2v2h-2zM1037 222h2v2h-2zM1038 223h2v2h-2zM1038 225h2v2h-2zM1035 226h2v2h-2zM1103 213h2v2h-2zM1103 214h2v2h-2zM1106 216h2v2h-2zM1106 217h2v2h-2zM1103 219h2v2h-2zM1102 220h2v2h-2zM1105 222h2v2h-2zM1105 223h2v2h-2zM1103 225h2v2h-2zM1106 226h2v2h-2zM1173 213h2v2h-2zM1176 214h2v2h-2zM1174 216h2v2h-2zM1172 217h2v2h-2zM1174 219h2v2h-2zM1172 220h2v2h-2zM1172 222h2v2h-2zM1173 223h2v2h-2zM1175 225h2v2h-2zM1174 226h2v2h-2z" fill="#CC0A0A"/>
<path d="M1046 193h2v2h-2zM1047 194h2v2h-2zM1049 196h2v2h-2zM1048 198h2v2h-2zM1048 200h2v2h-2zM1046 202h2v2h-2zM1050 204h2v2h-2zM1046 206h2v2h-2z" fill="#FF00FF"/>
<path d="M1139 213h2v2h-2zM1141 215h2v2h-2zM1140 218h2v2h-2zM1139 220h2v2h-2zM1137 223h2v2h-2zM1137 225h2v2h-2z" fill="#22DDEE"/>
<path d="M1243 247h2v1h-2z" fill="#55AA55"/>
<path d="M1105 272h2v17h-2zM1105 312h2v17h-2zM1105 432h2v17h-2zM1105 532h2v17h-2zM1105 552h2v17h-2z" fill="#0A0A90"/>
<path d="M1059 301h2v2h-2z" fill="#808080"/>
<path d="M1243 292h2v3h-2zM1243 297h2v2h-2zM1243 303h2v5h-2zM1004 602h2v2h-2zM1000 597h2v2h-2zM1012 598h2v2h-2zM1009 600h2v2h-2zM1012 601h2v2h-2zM1001 598h2v2h-2zM1001 598h2v2h-2zM1010 603h2v2h-2zM998 592h2v2h-2zM1134 597h2v2h-2zM1140 595h2v2h-2zM1142 595h2v2h-2zM1150 605h2v2h-2zM1163 593h2v2h-2zM1195 593h2v2h-2zM997 626h2v2h-2zM989 616h2v2h-2zM993 619h2v2h-2zM993 618h2v2h-2zM992 619h2v2h-2zM979 615h2v2h-2zM1056 612h2v2h-2zM1055 616h2v2h-2zM1019 626h2v2h-2zM1019 626h2v2h-2zM1003 625h2v2h-2zM1035 612h2v2h-2zM1048 625h2v2h-2zM1027 626h2v2h-2zM1032 621h2v2h-2zM1019 618h2v2h-2zM1052 620h2v2h-2zM1025 619h2v2h-2zM1034 625h2v2h-2zM1022 620h2v2h-2zM999 620h2v2h-2zM1040 627h2v2h-2zM1089 626h2v2h-2zM1064 623h2v2h-2zM1129 625h2v2h-2zM1078 620h2v2h-2zM1083 615h2v2h-2zM1108 612h2v2h-2zM1126 626h2v2h-2zM1110 616h2v2h-2zM1134 617h2v2h-2zM1140 615h2v2h-2zM1142 615h2v2h-2zM1152 624h2v2h-2zM1173 627h2v2h-2zM1195 613h2v2h-2zM1137 620h2v2h-2z" fill="#0000B2"/>
<path d="M980 333h2v2h-2zM980 343h2v3h-2zM993 333h2v6h-2zM993 341h2v7h-2zM1018 333h2v7h-2zM1018 343h2v5h-2zM1043 334h2v2h-2zM1043 339h2v2h-2zM1043 342h2v2h-2zM1043 345h2v2h-2zM1143 337h2v2h-2zM1205 339h2v2h-2zM1205 345h2v2h-2zM1243 372h2v16h-2zM1002 394h2v13h-2zM1036 393h2v2h-2zM1036 404h2v2h-2zM1243 405h2v2h-2zM1243 413h2v2h-2zM998 453h2v6h-2zM998 462h2v7h-2zM1029 464h2v2h-2zM1120 457h2v2h-2zM1120 467h2v1h-2zM1151 456h2v2h-2zM1151 463h2v2h-2zM1243 455h2v2h-2zM1243 459h2v2h-2zM1243 462h2v2h-2zM1243 465h2v2h-2zM978 473h2v7h-2zM978 483h2v5h-2zM1049 481h2v2h-2zM1171 484h2v2h-2zM1243 485h2v2h-2zM1243 494h2v2h-2zM1243 498h2v2h-2zM1243 507h2v2h-2zM1243 495h2v2h-2zM1104 514h2v14h-2zM1243 523h2v3h-2zM1243 573h2v7h-2zM1243 583h2v5h-2zM1036 640h2v8h-2zM1023 640h2v5h-2zM1014 641h2v3h-2zM975 633h2v7h-2zM983 634h2v7h-2zM1024 654h2v4h-2zM1024 662h2v6h-2zM1036 653h2v4h-2zM1036 660h2v3h-2zM1036 665h2v3h-2zM1011 660h2v6h-2zM1057 658h2v2h-2zM1104 664h2v2h-2zM982 673h2v2h-2zM985 675h2v2h-2zM1036 674h2v6h-2zM1104 673h2v6h-2z" fill="#2CD044"/>
<path d="M1137 604h2v2h-2zM1139 603h2v2h-2zM1184 599h2v2h-2zM1195 606h2v2h-2zM1196 605h2v2h-2zM1194 618h2v2h-2z" fill="#DDCC22"/>
<path d="M970 618h2v2h-2zM969 623h2v2h-2zM969 612h2v2h-2zM975 613h2v2h-2zM972 612h2v2h-2zM979 617h2v2h-2zM974 615h2v2h-2zM974 612h2v2h-2zM970 622h2v2h-2zM968 613h2v2h-2zM973 622h2v2h-2zM974 627h2v2h-2zM976 619h2v2h-2zM976 615h2v2h-2zM968 619h2v2h-2zM974 623h2v2h-2zM972 627h2v2h-2zM978 615h2v2h-2zM973 625h2v2h-2zM974 619h2v2h-2zM971 617h2v2h-2zM974 627h2v2h-2zM972 619h2v2h-2zM976 613h2v2h-2zM969 619h2v2h-2zM968 617h2v2h-2zM972 624h2v2h-2zM978 615h2v2h-2zM971 612h2v2h-2zM978 620h2v2h-2zM979 613h2v2h-2zM972 619h2v2h-2zM974 626h2v2h-2zM971 617h2v2h-2zM972 614h2v2h-2zM978 615h2v2h-2zM968 615h2v2h-2zM969 613h2v2h-2zM975 612h2v2h-2zM971 620h2v2h-2z" fill="#DD2200"/>
<path d="M968 632h2v17h-2zM968 652h2v17h-2zM968 672h2v8h-2z" fill="#0000FF"/>
<path d="M993 641h2v2h-2zM983 637h2v2h-2zM995 641h2v2h-2zM976 643h2v2h-2zM971 637h2v2h-2zM975 647h2v2h-2zM974 636h2v2h-2zM1000 637h2v2h-2zM988 645h2v2h-2zM1001 641h2v2h-2zM992 641h2v2h-2zM971 633h2v2h-2zM993 638h2v2h-2zM975 645h2v2h-2zM1002 636h2v2h-2zM973 646h2v2h-2zM985 645h2v2h-2zM1003 636h2v2h-2zM986 636h2v2h-2zM999 635h2v2h-2zM979 646h2v2h-2zM997 633h2v2h-2zM970 641h2v2h-2zM1005 635h2v2h-2zM993 647h2v2h-2zM989 641h2v2h-2zM984 642h2v2h-2zM1002 641h2v2h-2zM990 644h2v2h-2zM998 632h2v2h-2zM992 633h2v2h-2zM972 644h2v2h-2zM988 633h2v2h-2zM1003 635h2v2h-2zM1005 645h2v2h-2zM1008 645h2v2h-2zM975 642h2v2h-2zM997 638h2v2h-2zM1000 647h2v2h-2zM996 639h2v2h-2zM1002 633h2v2h-2zM984 637h2v2h-2zM999 642h2v2h-2zM1001 644h2v2h-2zM993 644h2v2h-2zM997 632h2v2h-2zM998 637h2v2h-2zM986 636h2v2h-2zM974 646h2v2h-2zM974 633h2v2h-2zM1008 647h2v2h-2zM987 633h2v2h-2zM995 637h2v2h-2zM989 638h2v2h-2zM1000 633h2v2h-2zM1008 644h2v2h-2zM1010 637h2v2h-2zM999 635h2v2h-2zM980 637h2v2h-2zM998 638h2v2h-2zM1021 646h2v2h-2zM1028 647h2v2h-2zM1022 637h2v2h-2zM1031 633h2v2h-2zM1052 633h2v2h-2zM1053 638h2v2h-2zM1027 645h2v2h-2zM1040 636h2v2h-2zM1018 646h2v2h-2zM1058 641h2v2h-2zM1015 641h2v2h-2zM1057 634h2v2h-2zM1058 633h2v2h-2zM1018 637h2v2h-2zM1058 641h2v2h-2zM1022 633h2v2h-2zM1062 637h2v2h-2zM1051 634h2v2h-2zM1088 641h2v2h-2zM1190 678h2v2h-2zM1183 674h2v2h-2zM1215 672h2v2h-2zM1197 674h2v2h-2zM1190 676h2v2h-2zM1169 675h2v2h-2zM1152 674h2v2h-2zM1202 672h2v2h-2zM1224 674h2v2h-2zM1145 674h2v2h-2zM1154 677h2v2h-2zM1221 672h2v2h-2zM1222 672h2v2h-2zM1236 672h2v2h-2zM1201 678h2v2h-2zM1163 677h2v2h-2zM1209 674h2v2h-2zM1153 674h2v2h-2zM1157 676h2v2h-2zM1151 678h2v2h-2zM1169 677h2v2h-2zM1203 676h2v2h-2zM1163 676h2v2h-2zM1160 676h2v2h-2zM1152 675h2v2h-2zM1197 675h2v2h-2zM1178 677h2v2h-2zM1220 672h2v2h-2zM1193 678h2v2h-2zM1156 672h2v2h-2zM1151 672h2v2h-2zM1202 675h2v2h-2zM1170 673h2v2h-2zM1218 676h2v2h-2zM1216 673h2v2h-2zM1193 673h2v2h-2zM1186 678h2v2h-2zM1159 676h2v2h-2zM1231 674h2v2h-2zM1143 676h2v2h-2z" fill="#F5C020"/>
<path d="M1239 640h2v9h-2zM1243 632h2v17h-2zM1243 652h2v17h-2zM1243 672h2v8h-2z" fill="#CC1111"/>
<path d="M973 666h2v2h-2zM974 660h2v2h-2zM976 654h2v2h-2zM1005 666h2v2h-2zM1001 666h2v2h-2zM970 666h2v2h-2zM995 666h2v2h-2zM980 662h2v2h-2zM1006 666h2v2h-2zM977 660h2v2h-2zM997 667h2v2h-2zM991 652h2v2h-2zM988 666h2v2h-2zM1008 659h2v2h-2zM979 666h2v2h-2zM982 660h2v2h-2zM992 661h2v2h-2zM1004 654h2v2h-2zM989 653h2v2h-2zM977 654h2v2h-2zM986 666h2v2h-2zM971 661h2v2h-2zM999 658h2v2h-2zM1009 652h2v2h-2zM991 666h2v2h-2zM996 653h2v2h-2zM982 652h2v2h-2zM1007 654h2v2h-2zM1000 666h2v2h-2zM1002 654h2v2h-2zM988 656h2v2h-2zM983 656h2v2h-2zM1005 667h2v2h-2zM985 663h2v2h-2zM999 660h2v2h-2zM981 665h2v2h-2zM985 663h2v2h-2zM982 664h2v2h-2zM1009 661h2v2h-2zM989 663h2v2h-2zM1009 660h2v2h-2zM1031 656h2v2h-2zM1017 657h2v2h-2zM1015 664h2v2h-2zM1057 667h2v2h-2zM1030 663h2v2h-2zM1029 653h2v2h-2zM1024 655h2v2h-2z" fill="#22DD33"/>
<path d="M968 154h2v1h-2zM968 159h2v1h-2zM968 164h2v1h-2zM968 168h2v1h-2zM1105 274h2v1h-2zM1105 279h2v1h-2zM1105 284h2v1h-2zM1105 288h2v1h-2zM1105 314h2v1h-2zM1105 319h2v1h-2zM1105 324h2v1h-2zM1105 328h2v1h-2zM1105 434h2v1h-2zM1105 439h2v1h-2zM1105 444h2v1h-2zM1105 448h2v1h-2zM1105 534h2v1h-2zM1105 539h2v1h-2zM1105 544h2v1h-2zM1105 548h2v1h-2zM1105 554h2v1h-2zM1105 559h2v1h-2zM1105 564h2v1h-2zM1105 568h2v1h-2zM968 294h2v1h-2zM968 299h2v1h-2zM968 304h2v1h-2zM968 308h2v1h-2zM968 334h2v1h-2zM968 339h2v1h-2zM968 344h2v1h-2zM968 348h2v1h-2zM968 354h2v1h-2zM968 359h2v1h-2zM968 364h2v1h-2zM968 368h2v1h-2zM968 374h2v1h-2zM968 379h2v1h-2zM968 384h2v1h-2zM968 388h2v1h-2zM968 394h2v1h-2zM968 399h2v1h-2zM968 404h2v1h-2zM968 408h2v1h-2zM968 414h2v1h-2zM968 419h2v1h-2zM968 424h2v1h-2zM968 428h2v1h-2zM968 454h2v1h-2zM968 459h2v1h-2zM968 464h2v1h-2zM968 468h2v1h-2zM968 474h2v1h-2zM968 479h2v1h-2zM968 484h2v1h-2zM968 488h2v1h-2zM968 494h2v1h-2zM968 499h2v1h-2zM968 504h2v1h-2zM968 508h2v1h-2zM968 514h2v1h-2zM968 519h2v1h-2zM968 524h2v1h-2zM968 528h2v1h-2zM968 574h2v1h-2zM968 579h2v1h-2zM968 584h2v1h-2zM968 588h2v1h-2z" fill="#D01010"/>
<path d="M999 606h2v2h-2zM994 599h2v2h-2zM1009 604h2v2h-2zM999 592h2v2h-2zM1008 604h2v2h-2zM1008 599h2v2h-2zM1005 596h2v2h-2zM1006 599h2v2h-2zM997 595h2v2h-2zM1006 601h2v2h-2zM998 594h2v2h-2zM1007 603h2v2h-2zM1004 593h2v2h-2zM1007 595h2v2h-2zM992 606h2v2h-2zM1003 599h2v2h-2zM996 594h2v2h-2zM1005 598h2v2h-2zM991 599h2v2h-2zM995 607h2v2h-2zM993 603h2v2h-2zM1006 605h2v2h-2zM994 592h2v2h-2zM995 601h2v2h-2zM995 592h2v2h-2zM999 596h2v2h-2zM1009 601h2v2h-2zM1005 596h2v2h-2zM1003 607h2v2h-2zM1007 592h2v2h-2zM996 607h2v2h-2zM996 607h2v2h-2zM997 602h2v2h-2zM1002 598h2v2h-2zM992 606h2v2h-2zM1005 607h2v2h-2zM1005 596h2v2h-2zM1000 600h2v2h-2zM1004 601h2v2h-2zM997 600h2v2h-2zM1000 594h2v2h-2zM1009 596h2v2h-2zM1015 593h2v2h-2zM1015 595h2v2h-2zM1011 599h2v2h-2zM1014 594h2v2h-2zM1012 598h2v2h-2zM1021 596h2v2h-2zM1018 600h2v2h-2zM1014 603h2v2h-2zM1049 597h2v2h-2zM1068 599h2v2h-2zM1068 599h2v2h-2zM1067 602h2v2h-2zM1052 604h2v2h-2zM1068 601h2v2h-2zM1056 604h2v2h-2zM1054 599h2v2h-2zM1070 592h2v2h-2zM1056 603h2v2h-2zM1052 605h2v2h-2zM1053 601h2v2h-2zM1065 593h2v2h-2zM1070 597h2v2h-2zM1066 599h2v2h-2zM1058 595h2v2h-2zM1067 606h2v2h-2zM1058 595h2v2h-2zM1058 592h2v2h-2zM1067 604h2v2h-2zM1065 606h2v2h-2zM1064 597h2v2h-2zM1068 594h2v2h-2zM1071 599h2v2h-2zM1070 600h2v2h-2zM1055 592h2v2h-2zM1055 594h2v2h-2zM1054 597h2v2h-2zM1067 607h2v2h-2zM1064 596h2v2h-2zM1058 606h2v2h-2zM1065 598h2v2h-2zM1057 595h2v2h-2zM1067 601h2v2h-2zM1068 600h2v2h-2zM1066 598h2v2h-2zM1058 601h2v2h-2zM1060 605h2v2h-2zM1064 597h2v2h-2zM1060 596h2v2h-2zM1065 607h2v2h-2zM1065 602h2v2h-2zM1068 597h2v2h-2zM1061 606h2v2h-2zM1051 595h2v2h-2zM1203 607h2v2h-2zM1203 597h2v2h-2zM1203 603h2v2h-2zM1202 597h2v2h-2zM1200 596h2v2h-2zM1201 597h2v2h-2zM1216 599h2v2h-2zM1218 594h2v2h-2zM1221 592h2v2h-2zM1217 606h2v2h-2zM1215 606h2v2h-2zM1216 603h2v2h-2zM1232 606h2v2h-2zM1231 595h2v2h-2zM1236 607h2v2h-2zM1235 592h2v2h-2zM1239 605h2v2h-2zM1232 598h2v2h-2zM1236 600h2v2h-2zM1232 593h2v2h-2zM1237 599h2v2h-2zM1234 603h2v2h-2zM1231 607h2v2h-2zM1229 606h2v2h-2zM1230 598h2v2h-2zM1234 599h2v2h-2zM1233 603h2v2h-2zM1236 600h2v2h-2zM1234 607h2v2h-2zM1237 597h2v2h-2zM1230 602h2v2h-2zM1232 600h2v2h-2zM1233 605h2v2h-2zM1234 600h2v2h-2zM1236 600h2v2h-2zM1233 606h2v2h-2zM1233 604h2v2h-2zM1233 596h2v2h-2zM1235 605h2v2h-2zM1235 599h2v2h-2zM1202 622h2v2h-2zM1202 623h2v2h-2zM1201 618h2v2h-2zM1203 624h2v2h-2zM1201 614h2v2h-2zM1200 616h2v2h-2zM1218 624h2v2h-2zM1219 624h2v2h-2zM1217 622h2v2h-2zM1218 623h2v2h-2zM1217 617h2v2h-2zM1216 624h2v2h-2zM1237 614h2v2h-2zM1231 623h2v2h-2zM1231 617h2v2h-2zM1233 618h2v2h-2zM1228 627h2v2h-2zM1231 624h2v2h-2zM1234 625h2v2h-2zM1229 626h2v2h-2zM1228 612h2v2h-2zM1232 622h2v2h-2zM1233 623h2v2h-2zM1227 627h2v2h-2zM1228 625h2v2h-2zM1227 627h2v2h-2zM1238 613h2v2h-2zM1237 614h2v2h-2zM1229 622h2v2h-2zM1230 616h2v2h-2zM1233 626h2v2h-2zM1230 620h2v2h-2zM1235 621h2v2h-2zM1232 623h2v2h-2zM1232 619h2v2h-2zM1227 614h2v2h-2zM1232 627h2v2h-2zM1238 614h2v2h-2zM1236 613h2v2h-2zM1237 617h2v2h-2z" fill="#FFFFFF"/>
<text x="951.5" y="186" font-family='"Liberation Sans",sans-serif' font-size="10.5" text-anchor="middle" fill="#C01828">Y</text>
<text x="951.5" y="606" font-family='"Liberation Sans",sans-serif' font-size="10.5" text-anchor="middle" fill="#C01828">X</text>
<rect x="1253" y="150" width="17" height="530" fill="#F3F3EA"/>
<defs><linearGradient id="sg" x1="0" x2="1" y1="0" y2="0"><stop offset="0" stop-color="#B9C69B"/><stop offset="0.5" stop-color="#A3B282"/><stop offset="1" stop-color="#8C9C68"/></linearGradient></defs>
<rect x="1254.5" y="151.5" width="14" height="14" rx="1.5" fill="url(#sg)" stroke="#fff"/>
<path d="M1258 161 L1261.5 157 L1265 161" stroke="#fff" stroke-width="2" fill="none" shape-rendering="auto"/>
<rect x="1254.5" y="167.5" width="14" height="307" rx="1.5" fill="url(#sg)" stroke="#fff"/>
<path d="M1258 316.5 h7 M1258 318.5 h7 M1258 320.5 h7 M1258 322.5 h7" stroke="#D5DEBE" stroke-width="1"/>
<rect x="1254.5" y="663.5" width="14" height="14" rx="1.5" fill="url(#sg)" stroke="#fff"/>
<path d="M1258 668 L1261.5 672 L1265 668" stroke="#fff" stroke-width="2" fill="none" shape-rendering="auto"/>
</svg>
</body></html>
